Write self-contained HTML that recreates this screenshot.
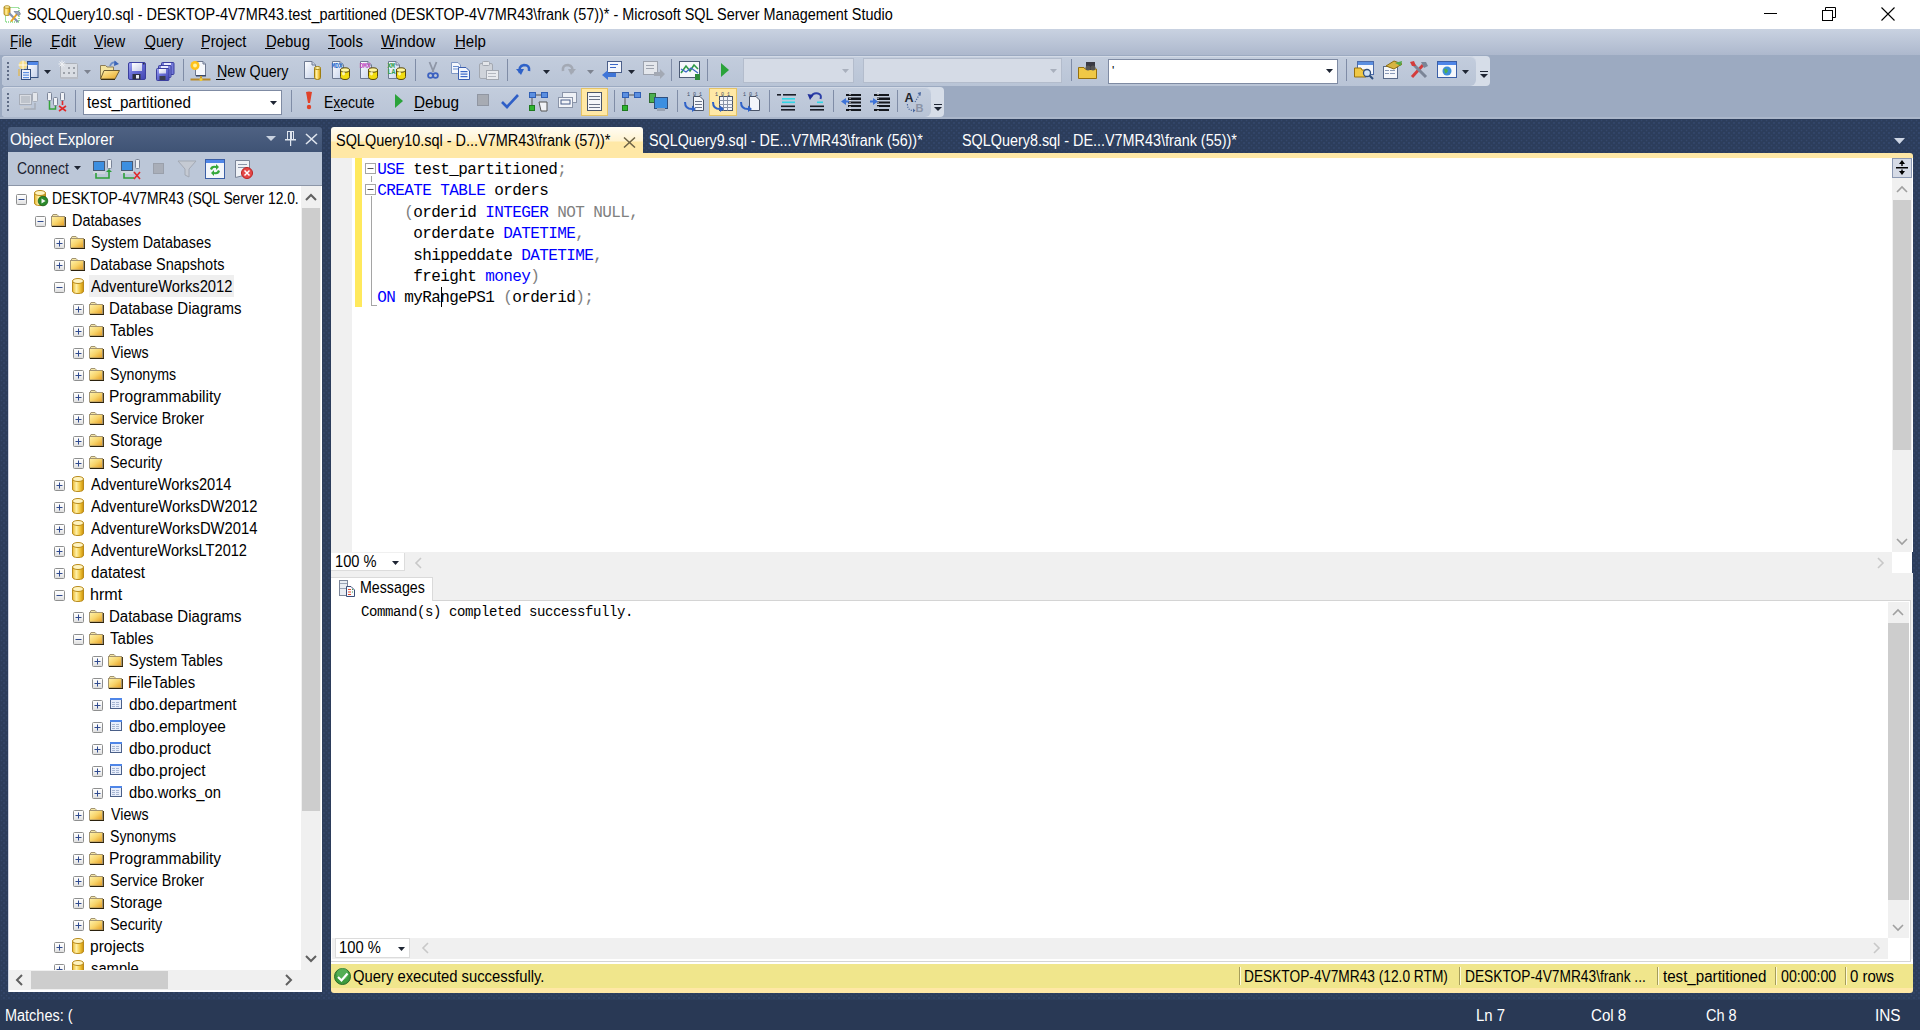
<!DOCTYPE html><html><head><meta charset="utf-8"><style>html,body{margin:0;padding:0;width:1920px;height:1030px;overflow:hidden;background:#2a3a57}body>div,body>svg,div>div,div>svg{position:absolute}</style></head><body><svg width="0" height="0" style="position:absolute"><defs><linearGradient id="gexp" x1="0" y1="0" x2="0" y2="1"><stop offset="0" stop-color="#ffffff"/><stop offset="0.5" stop-color="#f4f4f4"/><stop offset="1" stop-color="#dcdcdc"/></linearGradient><linearGradient id="gfold" x1="0" y1="0" x2="1" y2="1"><stop offset="0" stop-color="#fff3ad"/><stop offset="0.5" stop-color="#f8d46a"/><stop offset="1" stop-color="#e49a1f"/></linearGradient><linearGradient id="gcyl" x1="0" y1="0" x2="1" y2="0"><stop offset="0" stop-color="#e9b62c"/><stop offset="0.35" stop-color="#fff1a8"/><stop offset="0.7" stop-color="#f0c43a"/><stop offset="1" stop-color="#c98f0c"/></linearGradient><linearGradient id="gsave" x1="0" y1="0" x2="1" y2="1"><stop offset="0" stop-color="#a3a8f5"/><stop offset="0.4" stop-color="#6c72d8"/><stop offset="1" stop-color="#3f44b0"/></linearGradient><linearGradient id="gwin" x1="0" y1="0" x2="1" y2="1"><stop offset="0" stop-color="#ffffff"/><stop offset="1" stop-color="#c3d0ea"/></linearGradient><linearGradient id="gopen" x1="0" y1="0" x2="1" y2="1"><stop offset="0" stop-color="#fff0a8"/><stop offset="1" stop-color="#e9a623"/></linearGradient><linearGradient id="glabel" x1="0" y1="0" x2="1" y2="1"><stop offset="0" stop-color="#ffffff"/><stop offset="1" stop-color="#c9cde8"/></linearGradient></defs></svg><div style="left:0px;top:0px;width:1920px;height:29px;background:#fff"></div><svg style="left:3px;top:5px" width="20" height="19" viewBox="0 0 20 19"><rect x="2.5" y="2.5" width="13.5" height="14.5" fill="none" stroke="#3fc43f" stroke-dasharray="1 1"/><path d="M1 2 L1 9 Q1 10.5 4 10.5 Q7 10.5 7 9 L7 2 Z" fill="url(#gcyl)" stroke="#a88418" stroke-width="0.8"/><ellipse cx="4" cy="2" rx="3" ry="1.3" fill="#fff1a8" stroke="#a88418" stroke-width="0.8"/><path d="M6 8 L15 17" stroke="#8593ad" stroke-width="2.2"/><path d="M14 9 L8 16.5" stroke="#e9a524" stroke-width="2"/><path d="M11 6.5 L16 6.5 L17.5 9 L15.5 11 Z" fill="#9aa6ba" stroke="#5d6a82" stroke-width="0.6"/></svg><div id="t0" style="left:26.60px;top:5.05px;font-family:'Liberation Sans', sans-serif;font-size:16px;line-height:20.8px;color:#000;white-space:pre;transform:scaleX(0.9017);transform-origin:0 0;">SQLQuery10.sql - DESKTOP-4V7MR43.test_partitioned (DESKTOP-4V7MR43\frank (57))* - Microsoft SQL Server Management Studio</div><div style="left:1764px;top:13px;width:13px;height:1px;background:#000"></div><svg style="left:1822px;top:7px" width="14" height="14" viewBox="0 0 14 14"><rect x="0.5" y="3.5" width="10" height="10" fill="none" stroke="#000"/><path d="M3.5 3.5 L3.5 0.5 L13.5 0.5 L13.5 10.5 L10.5 10.5" fill="none" stroke="#000"/></svg><svg style="left:1881px;top:7px" width="14" height="14" viewBox="0 0 14 14"><path d="M0.5 0.5 L13.5 13.5 M13.5 0.5 L0.5 13.5" stroke="#000" stroke-width="1.1"/></svg><div style="left:0px;top:29px;width:1920px;height:26px;background:linear-gradient(#c9d2e1,#adb8cd)"></div><div id="t1" style="left:9.63px;top:32.05px;font-family:'Liberation Sans', sans-serif;font-size:16px;line-height:20.8px;color:#000;white-space:pre;transform:scaleX(0.8600);transform-origin:0 0;">File</div><div style="left:10px;top:48px;width:7px;height:1px;background:#000"></div><div id="t2" style="left:50.95px;top:32.05px;font-family:'Liberation Sans', sans-serif;font-size:16px;line-height:20.8px;color:#000;white-space:pre;transform:scaleX(0.9036);transform-origin:0 0;">Edit</div><div style="left:50px;top:48px;width:7px;height:1px;background:#000"></div><div id="t3" style="left:94.00px;top:32.05px;font-family:'Liberation Sans', sans-serif;font-size:16px;line-height:20.8px;color:#000;white-space:pre;transform:scaleX(0.9057);transform-origin:0 0;">View</div><div style="left:94px;top:48px;width:9px;height:1px;background:#000"></div><div id="t4" style="left:144.56px;top:32.05px;font-family:'Liberation Sans', sans-serif;font-size:16px;line-height:20.8px;color:#000;white-space:pre;transform:scaleX(0.8795);transform-origin:0 0;">Query</div><div style="left:144px;top:48px;width:11px;height:1px;background:#000"></div><div id="t5" style="left:201.37px;top:32.05px;font-family:'Liberation Sans', sans-serif;font-size:16px;line-height:20.8px;color:#000;white-space:pre;transform:scaleX(0.9100);transform-origin:0 0;">Project</div><div style="left:201px;top:48px;width:8px;height:1px;background:#000"></div><div id="t6" style="left:265.76px;top:32.05px;font-family:'Liberation Sans', sans-serif;font-size:16px;line-height:20.8px;color:#000;white-space:pre;transform:scaleX(0.9319);transform-origin:0 0;">Debug</div><div style="left:265px;top:48px;width:10px;height:1px;background:#000"></div><div id="t7" style="left:328.00px;top:32.05px;font-family:'Liberation Sans', sans-serif;font-size:16px;line-height:20.8px;color:#000;white-space:pre;transform:scaleX(0.9351);transform-origin:0 0;">Tools</div><div style="left:328px;top:48px;width:7px;height:1px;background:#000"></div><div id="t8" style="left:381.49px;top:32.05px;font-family:'Liberation Sans', sans-serif;font-size:16px;line-height:20.8px;color:#000;white-space:pre;transform:scaleX(0.9518);transform-origin:0 0;">Window</div><div style="left:381px;top:48px;width:13px;height:1px;background:#000"></div><div id="t9" style="left:454.77px;top:32.05px;font-family:'Liberation Sans', sans-serif;font-size:16px;line-height:20.8px;color:#000;white-space:pre;transform:scaleX(0.9394);transform-origin:0 0;">Help</div><div style="left:454px;top:48px;width:11px;height:1px;background:#000"></div><div style="left:0px;top:55px;width:1920px;height:64px;background:#9caac1"></div><div style="left:2px;top:56px;width:1488px;height:30px;background:#d6dde8;border-radius:4px"></div><div style="left:2px;top:56px;width:1474px;height:30px;background:linear-gradient(#c3cddd,#b9c4d6);border-radius:4px 6px 6px 4px;box-shadow:inset 0 1px 0 #d3dae6"></div><div style="left:2px;top:87px;width:942px;height:30px;background:#d6dde8;border-radius:4px"></div><div style="left:2px;top:87px;width:929px;height:30px;background:linear-gradient(#c3cddd,#b9c4d6);border-radius:4px 6px 6px 4px;box-shadow:inset 0 1px 0 #d3dae6"></div><div style="left:0px;top:117px;width:1920px;height:2px;background:#aab6ca"></div><div style="left:7px;top:62px;width:2px;height:2px;background:#5f6c85"></div><div style="left:7px;top:66px;width:2px;height:2px;background:#5f6c85"></div><div style="left:7px;top:70px;width:2px;height:2px;background:#5f6c85"></div><div style="left:7px;top:74px;width:2px;height:2px;background:#5f6c85"></div><div style="left:7px;top:78px;width:2px;height:2px;background:#5f6c85"></div><div style="left:7px;top:93px;width:2px;height:2px;background:#5f6c85"></div><div style="left:7px;top:97px;width:2px;height:2px;background:#5f6c85"></div><div style="left:7px;top:101px;width:2px;height:2px;background:#5f6c85"></div><div style="left:7px;top:105px;width:2px;height:2px;background:#5f6c85"></div><div style="left:7px;top:109px;width:2px;height:2px;background:#5f6c85"></div><svg style="left:18px;top:60px" width="22" height="21" viewBox="0 0 22 21"><rect x="9.5" y="1.5" width="10.5" height="16" fill="url(#gwin)" stroke="#34507f"/><rect x="10" y="2" width="10" height="3" fill="#4f86e8"/><rect x="3.5" y="9.5" width="9" height="10" fill="#eef2fa" stroke="#34507f"/><g fill="#5b8fe0"><rect x="5" y="12" width="6" height="1.2"/><rect x="5" y="14.5" width="6" height="1.2"/><rect x="5" y="17" width="6" height="1.2"/></g><circle cx="5" cy="5" r="4.2" fill="#ffe27a" opacity="0.85"/><path d="M5 0.5 L5 9.5 M0.5 5 L9.5 5" stroke="#ffffff" stroke-width="1" opacity="0.9"/><path d="M1 9 L1 16" stroke="#e6b640" stroke-width="1.2"/></svg><svg style="left:44px;top:70px" width="8" height="4" viewBox="0 0 8 4"><path d="M0 0 L7 0 L3.5 4 Z" fill="#1e2533"/></svg><svg style="left:58px;top:60px" width="22" height="21" viewBox="0 0 22 21"><rect x="2.5" y="3.5" width="17" height="15" rx="1" fill="#d9dde3" stroke="#aeb3bb"/><rect x="3" y="17" width="17" height="2" fill="#b9bdc5"/><g fill="#9ea3ab"><rect x="10" y="7" width="2" height="2"/><rect x="15" y="7" width="2" height="2"/><rect x="5" y="12" width="2" height="2"/><rect x="10" y="12" width="2" height="2"/><rect x="15" y="12" width="2" height="2"/></g><path d="M4 0.5 L4 7.5 M0.5 4 L7.5 4 M1.5 1.5 L6.5 6.5 M6.5 1.5 L1.5 6.5" stroke="#eef0f3" stroke-width="1"/></svg><svg style="left:84px;top:70px" width="8" height="4" viewBox="0 0 8 4"><path d="M0 0 L7 0 L3.5 4 Z" fill="#7d8390"/></svg><svg style="left:99px;top:60px" width="22" height="21" viewBox="0 0 22 21"><path d="M1.5 5.5 L6.5 5.5 L8 7 L14.5 7 L14.5 18.5 L1.5 18.5 Z" fill="#f4e4a0" stroke="#8c7c58"/><path d="M5 10.5 L20.5 10.5 L16 19 L1.5 19 Z" fill="url(#gopen)" stroke="#6e5d32"/><path d="M2 19.5 L16 19.5" stroke="#3a2e10" stroke-width="1"/><path d="M11 6 Q12.5 1.5 17 2.5" fill="none" stroke="#6a8cc8" stroke-width="1.8"/><path d="M15.5 0.5 L20 4 L15 6 Z" fill="#3a64b8"/></svg><svg style="left:128px;top:60px" width="20" height="21" viewBox="0 0 20 21"><rect x="0.5" y="2.5" width="17" height="17" rx="1.5" fill="url(#gsave)" stroke="#3b3f9e"/><rect x="4" y="3" width="10" height="8" fill="url(#glabel)"/><rect x="4.5" y="14" width="8" height="5.5" fill="#2d3040"/><rect x="8" y="15" width="3" height="3.5" fill="#e8eaf4"/><rect x="15" y="3" width="1.5" height="1.5" fill="#2d3040"/></svg><svg style="left:156px;top:60px" width="20" height="21" viewBox="0 0 20 21"><rect x="5.5" y="2.5" width="12.5" height="12" rx="1" fill="#7379d8" stroke="#3b3f9e"/><rect x="8" y="3" width="7" height="2" fill="#e8eaff"/><rect x="2.5" y="5.5" width="12.5" height="12" rx="1" fill="#7d83de" stroke="#3b3f9e"/><rect x="5" y="6" width="7" height="2" fill="#e8eaff"/><rect x="0.5" y="8.5" width="12.5" height="12" rx="1" fill="url(#gsave)" stroke="#3b3f9e"/><rect x="3" y="9" width="7" height="4.5" fill="url(#glabel)"/><rect x="3.5" y="16" width="6" height="4" fill="#3a3d4e"/></svg><div style="left:183px;top:59px;width:1px;height:22px;background:#7f8ca6"></div><svg style="left:190px;top:60px" width="22" height="21" viewBox="0 0 22 21"><path d="M5.5 1.5 L13 1.5 L15.5 4 L15.5 15.5 L5.5 15.5 Z" fill="#f6f8fc" stroke="#6e7890"/><path d="M13 1.5 L13 4 L15.5 4" fill="#c9d2e3" stroke="#6e7890"/><rect x="6" y="15" width="10" height="1.5" fill="#3c4a66"/><circle cx="5" cy="5.5" r="4.5" fill="#ffc21a"/><circle cx="5" cy="5.5" r="2" fill="#fff3a0"/><path d="M0.5 19.5 L20.5 19.5" stroke="#b98a2a" stroke-width="2"/><rect x="10" y="16" width="2" height="5" fill="#c99a2e"/><circle cx="11" cy="19.5" r="1.5" fill="#f3d23a"/></svg><div id="t10" style="left:216.50px;top:62.05px;font-family:'Liberation Sans', sans-serif;font-size:16px;line-height:20.8px;color:#000;white-space:pre;transform:scaleX(0.8938);transform-origin:0 0;">New Query</div><div style="left:216px;top:79px;width:9px;height:1px;background:#000"></div><svg style="left:303px;top:60px" width="20" height="21" viewBox="0 0 20 21"><path d="M1.5 1.5 L9 1.5 L12.5 5 L12.5 18.5 L1.5 18.5 Z" fill="url(#gwin)" stroke="#6e7a92"/><path d="M9 1.5 L9 5 L12.5 5" fill="#c9d2e3" stroke="#6e7a92"/><path d="M11.5 8 L11.5 17.5 Q11.5 19.5 14.5 19.5 Q17.5 19.5 17.5 17.5 L17.5 8 Z" fill="url(#gcyl)" stroke="#9e7d10"/><ellipse cx="14.5" cy="8" rx="3" ry="1.5" fill="#fff1a0" stroke="#9e7d10"/></svg><svg style="left:331px;top:60px" width="20" height="21" viewBox="0 0 20 21"><path d="M1.5 1.5 L9 1.5 L12.5 5 L12.5 18.5 L1.5 18.5 Z" fill="url(#gwin)" stroke="#6e7a92"/><path d="M9 1.5 L9 5 L12.5 5" fill="#c9d2e3" stroke="#6e7a92"/><text x="0.5" y="7.5" font-family="Liberation Mono" font-size="6.5" font-weight="bold" fill="#2f6fd0" letter-spacing="-0.3">MDX</text><path d="M9.5 10 L9.5 16.5 Q9.5 19.5 14 19.5 Q18.5 19.5 18.5 16.5 L18.5 10 Z" fill="#f2dc10" stroke="#5a4a08"/><ellipse cx="14" cy="10" rx="4.5" ry="2.2" fill="#fff7a0" stroke="#5a4a08"/><ellipse cx="12.5" cy="13.5" rx="1.5" ry="2" fill="#fffbd0" opacity="0.8"/></svg><svg style="left:359px;top:60px" width="20" height="21" viewBox="0 0 20 21"><path d="M1.5 1.5 L9 1.5 L12.5 5 L12.5 18.5 L1.5 18.5 Z" fill="url(#gwin)" stroke="#6e7a92"/><path d="M9 1.5 L9 5 L12.5 5" fill="#c9d2e3" stroke="#6e7a92"/><text x="0.5" y="7.5" font-family="Liberation Mono" font-size="6.5" font-weight="bold" fill="#c04ac0" letter-spacing="-0.3">DMX</text><path d="M9.5 10 L9.5 16.5 Q9.5 19.5 14 19.5 Q18.5 19.5 18.5 16.5 L18.5 10 Z" fill="#f2dc10" stroke="#5a4a08"/><ellipse cx="14" cy="10" rx="4.5" ry="2.2" fill="#fff7a0" stroke="#5a4a08"/><ellipse cx="12.5" cy="13.5" rx="1.5" ry="2" fill="#fffbd0" opacity="0.8"/></svg><svg style="left:387px;top:60px" width="20" height="21" viewBox="0 0 20 21"><path d="M1.5 1.5 L9 1.5 L12.5 5 L12.5 18.5 L1.5 18.5 Z" fill="url(#gwin)" stroke="#6e7a92"/><path d="M9 1.5 L9 5 L12.5 5" fill="#c9d2e3" stroke="#6e7a92"/><text x="0.5" y="7.5" font-family="Liberation Mono" font-size="6.5" font-weight="bold" fill="#30a050" letter-spacing="-0.3">XM</text><text x="0.5" y="13.5" font-family="Liberation Mono" font-size="6.5" font-weight="bold" fill="#30a050">LA</text><path d="M9.5 10 L9.5 16.5 Q9.5 19.5 14 19.5 Q18.5 19.5 18.5 16.5 L18.5 10 Z" fill="#f2dc10" stroke="#5a4a08"/><ellipse cx="14" cy="10" rx="4.5" ry="2.2" fill="#fff7a0" stroke="#5a4a08"/><ellipse cx="12.5" cy="13.5" rx="1.5" ry="2" fill="#fffbd0" opacity="0.8"/></svg><div style="left:415px;top:59px;width:1px;height:22px;background:#7f8ca6"></div><svg style="left:424px;top:60px" width="18" height="21" viewBox="0 0 18 21"><path d="M5.5 2 L9.5 12 M12.5 2 L8.5 12" stroke="#8e96a6" stroke-width="1.8"/><circle cx="6.5" cy="15.5" r="2.4" fill="none" stroke="#3d62c0" stroke-width="1.8"/><circle cx="11.5" cy="15.5" r="2.4" fill="none" stroke="#3d62c0" stroke-width="1.8"/></svg><svg style="left:450px;top:60px" width="22" height="21" viewBox="0 0 22 21"><path d="M1.5 2.5 L8 2.5 L10.5 5 L10.5 13.5 L1.5 13.5 Z" fill="#f4f7fd" stroke="#7f97c4"/><g fill="#6b8fd0"><rect x="3" y="6" width="6" height="1"/><rect x="3" y="8.5" width="6" height="1"/></g><path d="M8.5 7.5 L16 7.5 L19.5 11 L19.5 19.5 L8.5 19.5 Z" fill="#f4f7fd" stroke="#3b5fb0"/><g fill="#3b67c7"><rect x="10.5" y="11" width="7" height="1.2"/><rect x="10.5" y="13.5" width="7" height="1.2"/><rect x="10.5" y="16" width="7" height="1.2"/></g></svg><svg style="left:478px;top:60px" width="22" height="21" viewBox="0 0 22 21"><rect x="1.5" y="3.5" width="13" height="15" rx="1.5" fill="#cfd3da" stroke="#a3a8b1"/><rect x="4.5" y="1.5" width="7" height="4" rx="1" fill="#e4e6ea" stroke="#a3a8b1"/><rect x="8.5" y="10.5" width="12" height="9" fill="#e8eaee" stroke="#a3a8b1"/><g fill="#b4b8c0"><rect x="10" y="13" width="8" height="1"/><rect x="10" y="16" width="8" height="1"/></g></svg><div style="left:507px;top:59px;width:1px;height:22px;background:#7f8ca6"></div><svg style="left:514px;top:60px" width="20" height="20" viewBox="0 0 20 20"><path d="M6 13 Q4 6 10 5 Q16 5 15 11" fill="none" stroke="#2f62c8" stroke-width="2.6"/><path d="M2 9 L7 15 L10 9 Z" fill="#2f62c8"/></svg><svg style="left:543px;top:70px" width="8" height="4" viewBox="0 0 8 4"><path d="M0 0 L7 0 L3.5 4 Z" fill="#1e2533"/></svg><svg style="left:558px;top:60px" width="20" height="20" viewBox="0 0 20 20"><path d="M14 13 Q16 6 10 5 Q4 5 5 11" fill="none" stroke="#a3a9b4" stroke-width="2.6"/><path d="M18 9 L13 15 L10 9 Z" fill="#a3a9b4"/></svg><svg style="left:587px;top:70px" width="8" height="4" viewBox="0 0 8 4"><path d="M0 0 L7 0 L3.5 4 Z" fill="#7d8390"/></svg><svg style="left:601px;top:60px" width="24" height="20" viewBox="0 0 24 20"><rect x="6.5" y="1.5" width="14" height="11" fill="#f3f6fc" stroke="#4b5f8a"/><rect x="9" y="4" width="8" height="1" fill="#3b67c7"/><rect x="9" y="7" width="6" height="1" fill="#3b67c7"/><path d="M1 15 L7 10 L7 13 L15 13 L15 17 L7 17 L7 20 Z" fill="#3f75d8"/></svg><svg style="left:628px;top:70px" width="8" height="4" viewBox="0 0 8 4"><path d="M0 0 L7 0 L3.5 4 Z" fill="#1e2533"/></svg><svg style="left:642px;top:60px" width="24" height="20" viewBox="0 0 24 20"><rect x="1.5" y="1.5" width="14" height="13" fill="#e4e7ec" stroke="#9da3ae"/><rect x="4" y="5" width="8" height="1" fill="#9da3ae"/><rect x="4" y="8" width="8" height="1" fill="#9da3ae"/><path d="M12 12 L18 12 L18 9 L23 14 L18 19 L18 16 L12 16 Z" fill="#a3a9b4"/></svg><div style="left:671px;top:59px;width:1px;height:22px;background:#7f8ca6"></div><svg style="left:679px;top:60px" width="22" height="20" viewBox="0 0 22 20"><rect x="0.5" y="1.5" width="20" height="16" fill="#f5f7fb" stroke="#4c5a74"/><path d="M2 13 L7 6 L11 11 L15 5 L19 9" fill="none" stroke="#2e9a46" stroke-width="1.6"/><path d="M2 9 L7 12 L12 8 L19 13" fill="none" stroke="#3b67c7" stroke-width="1.2"/><rect x="16" y="14" width="5" height="6" fill="#2e8a3a"/></svg><div style="left:707px;top:59px;width:1px;height:22px;background:#7f8ca6"></div><svg style="left:719px;top:60px" width="12" height="20" viewBox="0 0 12 20"><path d="M2 3 L10 10 L2 17 Z" fill="#2aa33a"/></svg><div style="left:743px;top:58px;width:111px;height:25px;background:#d5dbe6;border:1px solid #b3bccc;box-sizing:border-box"></div><svg style="left:842px;top:69px" width="8" height="4" viewBox="0 0 8 4"><path d="M0 0 L7 0 L3.5 4 Z" fill="#a9b0bd"/></svg><div style="left:863px;top:58px;width:199px;height:25px;background:#d5dbe6;border:1px solid #b3bccc;box-sizing:border-box"></div><svg style="left:1050px;top:69px" width="8" height="4" viewBox="0 0 8 4"><path d="M0 0 L7 0 L3.5 4 Z" fill="#a9b0bd"/></svg><div style="left:1071px;top:59px;width:1px;height:22px;background:#7f8ca6"></div><svg style="left:1077px;top:60px" width="22" height="20" viewBox="0 0 22 20"><path d="M1.5 7.5 L7 7.5 L8 9 L19.5 9 L19.5 18.5 L1.5 18.5 Z" fill="#f0c845" stroke="#96700f"/><rect x="9" y="2" width="9" height="8" fill="#3a3a44"/><circle cx="11" cy="8" r="2.5" fill="#555"/><circle cx="16" cy="8" r="2.5" fill="#555"/></svg><div style="left:1108px;top:59px;width:230px;height:25px;background:#fff;border:1px solid #7f8ba3;box-sizing:border-box"></div><div style="left:1112.00px;top:64.04px;font-family:'Liberation Sans', sans-serif;font-size:12px;line-height:15.6px;color:#000;white-space:pre;">'</div><svg style="left:1326px;top:69px" width="8" height="4" viewBox="0 0 8 4"><path d="M0 0 L7 0 L3.5 4 Z" fill="#1e2533"/></svg><div style="left:1346px;top:59px;width:1px;height:22px;background:#7f8ca6"></div><svg style="left:1353px;top:60px" width="22" height="20" viewBox="0 0 22 20"><rect x="4.5" y="1.5" width="16" height="13" fill="#f5f7fb" stroke="#4b6aa8"/><rect x="5" y="2" width="15" height="3" fill="#5b8fe0"/><path d="M1.5 8 L8 8 L9 10 L13 10 L13 17 L1.5 17 Z" fill="#f0c845" stroke="#96700f"/><circle cx="14" cy="13" r="3.5" fill="#cfe3f7" stroke="#2f4f7f" stroke-width="1.3"/><path d="M16.5 15.5 L20 19" stroke="#2f4f7f" stroke-width="2"/></svg><svg style="left:1381px;top:60px" width="22" height="20" viewBox="0 0 22 20"><rect x="2.5" y="6.5" width="14" height="12" fill="#f5f7fb" stroke="#5a6b8a"/><g fill="#8a9ab8"><rect x="4" y="10" width="4" height="1"/><rect x="9" y="10" width="5" height="1"/><rect x="4" y="13" width="4" height="1"/><rect x="9" y="13" width="5" height="1"/></g><path d="M5 6 L13 1 L21 4 L13 9 Z" fill="#d8b441" stroke="#8d6c12"/><path d="M14 3 L21 1 L20 6" fill="#56a84a"/></svg><svg style="left:1409px;top:60px" width="22" height="20" viewBox="0 0 22 20"><path d="M3 17 L14 5" stroke="#d43c3c" stroke-width="3"/><path d="M4 4 L17 17" stroke="#7b8597" stroke-width="3"/><path d="M12 2 L17 2 L19 6 L15 8 Z" fill="#7b8597"/><path d="M1 2 L5 1 L7 6 L3 6 Z" fill="#d43c3c"/></svg><svg style="left:1437px;top:60px" width="22" height="20" viewBox="0 0 22 20"><rect x="0.5" y="1.5" width="19" height="16" fill="#f5f7fb" stroke="#3b5fa6"/><rect x="1" y="2" width="18" height="3" fill="#4f86e8"/><circle cx="10" cy="11" r="4.5" fill="#3c8fd8"/><path d="M7 9 Q10 8 11 11 Q9 14 8 13 Z" fill="#4fb04a"/></svg><svg style="left:1462px;top:70px" width="8" height="4" viewBox="0 0 8 4"><path d="M0 0 L7 0 L3.5 4 Z" fill="#1e2533"/></svg><svg style="left:1479px;top:65px" width="10" height="16" viewBox="0 0 10 16"><rect x="1" y="6" width="8" height="1" fill="#1e2533"/><path d="M1 9 L9 9 L5 13 Z" fill="#1e2533"/></svg><svg style="left:18px;top:91px" width="22" height="20" viewBox="0 0 22 20"><rect x="1.5" y="3.5" width="12" height="10" fill="#d9dce2" stroke="#a7adb8"/><rect x="3" y="5" width="9" height="7" fill="#bfc4cc"/><rect x="2" y="15" width="11" height="3" fill="#c8ccd3"/><rect x="14.5" y="1.5" width="5" height="9" rx="1" fill="#e3e6eb" stroke="#a7adb8"/><path d="M17 12 L17 18 L6 18" fill="none" stroke="#a7adb8" stroke-width="1.5"/></svg><svg style="left:46px;top:91px" width="22" height="22" viewBox="0 0 22 22"><rect x="1.5" y="1.5" width="4" height="8" rx="1" fill="#f0f2f6" stroke="#7a8498"/><rect x="7.5" y="6.5" width="4" height="8" rx="1" fill="#f0f2f6" stroke="#7a8498"/><rect x="14.5" y="1.5" width="4" height="8" rx="1" fill="#f0f2f6" stroke="#7a8498"/><path d="M3.5 10 L3.5 18 L9.5 18 L9.5 15" fill="none" stroke="#34a33a" stroke-width="1.5"/><path d="M16.5 10 L16.5 14 M13 15 L20 20 M20 15 L13 20" stroke="#e02a2a" stroke-width="1.6"/></svg><div style="left:75px;top:90px;width:1px;height:22px;background:#7f8ca6"></div><div style="left:83px;top:90px;width:199px;height:25px;background:#fff;border:1px solid #7f8ba3;box-sizing:border-box"></div><div id="t11" style="left:86.50px;top:93.05px;font-family:'Liberation Sans', sans-serif;font-size:16px;line-height:20.8px;color:#000;white-space:pre;transform:scaleX(0.9491);transform-origin:0 0;">test_partitioned</div><svg style="left:270px;top:101px" width="8" height="4" viewBox="0 0 8 4"><path d="M0 0 L7 0 L3.5 4 Z" fill="#1e2533"/></svg><div style="left:291px;top:90px;width:1px;height:22px;background:#7f8ca6"></div><svg style="left:303px;top:91px" width="12" height="20" viewBox="0 0 12 20"><path d="M3 1 Q6 0 9 1 L7 12 L5 12 Z" fill="#e0422a"/><circle cx="6" cy="16" r="2.2" fill="#e0422a"/></svg><div id="t12" style="left:324.12px;top:93.05px;font-family:'Liberation Sans', sans-serif;font-size:16px;line-height:20.8px;color:#000;white-space:pre;transform:scaleX(0.8750);transform-origin:0 0;">Execute</div><div style="left:334px;top:110px;width:8px;height:1px;background:#000"></div><svg style="left:393px;top:91px" width="12" height="20" viewBox="0 0 12 20"><path d="M2 3 L10 10 L2 17 Z" fill="#2aa33a"/></svg><div id="t13" style="left:414.00px;top:93.05px;font-family:'Liberation Sans', sans-serif;font-size:16px;line-height:20.8px;color:#000;white-space:pre;transform:scaleX(0.9565);transform-origin:0 0;">Debug</div><div style="left:414px;top:110px;width:10px;height:1px;background:#000"></div><svg style="left:475px;top:92px" width="16" height="16" viewBox="0 0 16 16"><rect x="2.5" y="2.5" width="11" height="11" fill="#a7abb3" stroke="#9096a2"/></svg><svg style="left:500px;top:91px" width="20" height="20" viewBox="0 0 20 20"><path d="M2 11 L7 16 L18 4" fill="none" stroke="#2f5fc7" stroke-width="2.6"/></svg><svg style="left:528px;top:91px" width="22" height="22" viewBox="0 0 22 22"><rect x="1.5" y="1.5" width="6" height="5" fill="#5b8fe0" stroke="#2f5fb5"/><rect x="13.5" y="1.5" width="6" height="5" fill="#5b8fe0" stroke="#2f5fb5"/><rect x="1.5" y="14.5" width="5" height="5" fill="#2fb52f" stroke="#1e7a1e"/><path d="M8 4 L13 4 M4 7 L4 14" stroke="#555" stroke-width="1"/><path d="M11 11 L19 11 L19 20 L13 20 Z" fill="#f0f2f6" stroke="#555"/></svg><svg style="left:557px;top:91px" width="22" height="22" viewBox="0 0 22 22"><rect x="5.5" y="1.5" width="14" height="10" fill="#eef1f6" stroke="#8a94a8"/><rect x="1.5" y="6.5" width="14" height="10" fill="#f3f5f9" stroke="#8a94a8"/><rect x="4" y="9" width="9" height="4" fill="none" stroke="#4b5f8a"/></svg><div style="left:581px;top:88px;width:27px;height:28px;background:#ffe8a6;border:1px solid #e5c365;box-sizing:border-box"></div><svg style="left:584px;top:91px" width="22" height="22" viewBox="0 0 22 22"><rect x="3.5" y="1.5" width="14" height="18" fill="#f4f6fa" stroke="#4a5468"/><g fill="#6b7488"><rect x="5" y="5" width="11" height="1"/><rect x="5" y="8" width="11" height="1"/><rect x="5" y="13" width="11" height="1"/><rect x="5" y="16" width="11" height="1"/></g></svg><div style="left:614px;top:90px;width:1px;height:22px;background:#7f8ca6"></div><svg style="left:621px;top:91px" width="22" height="22" viewBox="0 0 22 22"><rect x="1.5" y="1.5" width="6" height="5" fill="#5b8fe0" stroke="#2f5fb5"/><rect x="13.5" y="1.5" width="6" height="5" fill="#5b8fe0" stroke="#2f5fb5"/><rect x="1.5" y="14.5" width="5" height="5" fill="#2fb52f" stroke="#1e7a1e"/><path d="M8 4 L13 4 M4 7 L4 14" stroke="#555" stroke-width="1"/></svg><svg style="left:648px;top:91px" width="22" height="22" viewBox="0 0 22 22"><rect x="1.5" y="2.5" width="6" height="9" fill="#4caf50" stroke="#2e6b2f"/><rect x="6.5" y="6.5" width="13" height="11" fill="#3d8fe0" stroke="#2f4f7f"/><rect x="9" y="17" width="8" height="3" fill="#9aa3b3"/></svg><div style="left:677px;top:90px;width:1px;height:22px;background:#7f8ca6"></div><svg style="left:684px;top:90px" width="22" height="23" viewBox="0 0 22 23"><g fill="#3a4a66" font-family="Liberation Mono" font-size="5"><text x="3" y="6">1 0 1</text></g><path d="M9.5 6.5 L16 6.5 L19.5 10 L19.5 20.5 L9.5 20.5 Z" fill="#f3f5fa" stroke="#4a5468"/><g fill="#6b7488"><rect x="11" y="11" width="7" height="1"/><rect x="11" y="14" width="7" height="1"/><rect x="11" y="17" width="7" height="1"/></g><path d="M2 12 Q2 18 8 18 L8 15.5 L12 19 L8 22 L8 20 Q0 20 0 12 Z" fill="#2f62c8"/></svg><div style="left:709px;top:88px;width:28px;height:28px;background:#ffe8a6;border:1px solid #e5c365;box-sizing:border-box"></div><svg style="left:712px;top:90px" width="22" height="23" viewBox="0 0 22 23"><g fill="#3a4a66" font-family="Liberation Mono" font-size="5"><text x="3" y="6">1 0 1</text></g><rect x="7.5" y="6.5" width="13" height="14" fill="#f3f5fa" stroke="#4a5468"/><path d="M7.5 10.5 L20.5 10.5 M7.5 14.5 L20.5 14.5 M7.5 17.5 L20.5 17.5 M11.5 6.5 L11.5 20.5 M15.5 6.5 L15.5 20.5" stroke="#8a94a8"/><path d="M2 12 Q2 18 8 18 L8 15.5 L12 19 L8 22 L8 20 Q0 20 0 12 Z" fill="#2f62c8"/></svg><svg style="left:740px;top:90px" width="22" height="23" viewBox="0 0 22 23"><g fill="#3a4a66" font-family="Liberation Mono" font-size="5"><text x="3" y="6">1 0 1</text></g><path d="M9.5 6.5 L16 6.5 L19.5 10 L19.5 20.5 L9.5 20.5 Z" fill="#f3f5fa" stroke="#4a5468"/><path d="M2 12 Q2 18 8 18 L8 15.5 L12 19 L8 22 L8 20 Q0 20 0 12 Z" fill="#2f62c8"/></svg><div style="left:769px;top:90px;width:1px;height:22px;background:#7f8ca6"></div><svg style="left:776px;top:91px" width="22" height="22" viewBox="0 0 22 22"><g fill="#1b1f28"><rect x="1" y="3" width="4" height="1.6"/><rect x="7" y="3" width="13" height="1.6"/><rect x="5" y="14.5" width="14" height="1.6"/><rect x="5" y="18" width="14" height="1.6"/></g><g fill="#2fd6e6"><rect x="6" y="7" width="13" height="1.6"/><rect x="6" y="10.5" width="13" height="1.6"/></g></svg><svg style="left:806px;top:91px" width="22" height="22" viewBox="0 0 22 22"><path d="M5 6 Q7 1.5 12 2.5 Q16 3.5 14.5 8" fill="none" stroke="#2b3fa8" stroke-width="2"/><path d="M1.5 3 L7.5 4 L4 9 Z" fill="#1f2f9a"/><rect x="11" y="10.5" width="6" height="1.6" fill="#2fd6e6"/><g fill="#1b1f28"><rect x="4" y="14.5" width="14" height="1.6"/><rect x="4" y="18" width="14" height="1.6"/></g></svg><div style="left:833px;top:90px;width:1px;height:22px;background:#7f8ca6"></div><svg style="left:840px;top:91px" width="22" height="22" viewBox="0 0 22 22"><g fill="#14171d"><rect x="6" y="3" width="15" height="2"/><rect x="8" y="6.5" width="13" height="2.5"/><rect x="8" y="10.5" width="13" height="2"/><rect x="8" y="14" width="13" height="2"/><rect x="6" y="18" width="15" height="2"/></g><path d="M10 1 L10 21" stroke="#ffffff" stroke-dasharray="1 1" stroke-width="1"/><path d="M1 10.5 L6 7 L6 9.5 L9 9.5 L9 11.5 L6 11.5 L6 14 Z" fill="#3f74d8"/></svg><svg style="left:869px;top:91px" width="22" height="22" viewBox="0 0 22 22"><g fill="#14171d"><rect x="5" y="3" width="15" height="2"/><rect x="8" y="6.5" width="13" height="2.5"/><rect x="8" y="10.5" width="13" height="2"/><rect x="8" y="14" width="13" height="2"/><rect x="5" y="18" width="15" height="2"/></g><path d="M9 1 L9 21" stroke="#ffffff" stroke-dasharray="1 1" stroke-width="1"/><path d="M9 10.5 L4 7 L4 9.5 L1 9.5 L1 11.5 L4 11.5 L4 14 Z" fill="#3f74d8"/></svg><div style="left:897px;top:90px;width:1px;height:22px;background:#7f8ca6"></div><svg style="left:904px;top:91px" width="22" height="22" viewBox="0 0 22 22"><text x="0.5" y="11" font-family="Liberation Sans" font-size="12.5" font-weight="bold" fill="#22262e">A</text><text x="11.5" y="21" font-family="Liberation Sans" font-size="11" font-weight="bold" fill="#8a93a6">B</text><path d="M3.5 13 Q3 19 9 19.5" fill="none" stroke="#4d6aa0" stroke-dasharray="1.2 1.3" stroke-width="1.2"/><path d="M9 17.5 L11.5 19.5 L9 21.5 Z" fill="#4d6aa0"/><path d="M11 11 L15.5 3.5" fill="none" stroke="#4d6aa0" stroke-dasharray="1.2 1.3" stroke-width="1.2"/><path d="M13.5 2 L17 1 L16.5 5 Z" fill="#4d6aa0"/></svg><svg style="left:933px;top:100px" width="10" height="16" viewBox="0 0 10 16"><rect x="1" y="4" width="8" height="1" fill="#1e2533"/><path d="M1 7 L9 7 L5 11 Z" fill="#1e2533"/></svg><div style="left:0px;top:119px;width:1920px;height:881px;background-color:#2c3d5b;background-image:radial-gradient(circle at 1.5px 1.5px,#34476b 0.6px,transparent 1.1px),radial-gradient(circle at 4px 4px,#34476b 0.6px,transparent 1.1px);background-size:5px 5px"></div><div style="left:0px;top:1000px;width:1920px;height:30px;background:#293955"></div><div style="left:8px;top:127px;width:314px;height:25px;background:linear-gradient(#4f6283,#3f5375);border-radius:3px 3px 0 0"></div><div id="t14" style="left:9.56px;top:130.05px;font-family:'Liberation Sans', sans-serif;font-size:16px;line-height:20.8px;color:#fff;white-space:pre;transform:scaleX(0.9404);transform-origin:0 0;">Object Explorer</div><svg style="left:266px;top:136px" width="11" height="6" viewBox="0 0 11 6"><path d="M0 0 L10 0 L5 5 Z" fill="#c9d2e0"/></svg><svg style="left:285px;top:131px" width="11" height="16" viewBox="0 0 11 16"><rect x="2.5" y="0.5" width="6" height="8" fill="none" stroke="#dfe5ee"/><rect x="5" y="1" width="2" height="7" fill="#dfe5ee"/><rect x="0" y="8" width="11" height="1.5" fill="#dfe5ee"/><rect x="5" y="9" width="1.2" height="6" fill="#dfe5ee"/></svg><svg style="left:305px;top:133px" width="13" height="12" viewBox="0 0 13 12"><path d="M1 1 L12 11 M12 1 L1 11" stroke="#dfe5ee" stroke-width="1.6"/></svg><div style="left:8px;top:152px;width:314px;height:34px;background:#bcc7d8"></div><div id="t15" style="left:16.63px;top:159.05px;font-family:'Liberation Sans', sans-serif;font-size:16px;line-height:20.8px;color:#1b2230;white-space:pre;transform:scaleX(0.8689);transform-origin:0 0;">Connect</div><svg style="left:74px;top:166px" width="8" height="4" viewBox="0 0 8 4"><path d="M0 0 L7 0 L3.5 4 Z" fill="#1e2533"/></svg><svg style="left:92px;top:158px" width="22" height="22" viewBox="0 0 22 22"><rect x="1.5" y="3.5" width="11" height="9" fill="#3d8fe0" stroke="#4a5a74"/><rect x="1" y="13" width="12" height="3" fill="#cfd5de"/><rect x="15.5" y="1.5" width="4" height="9" rx="1" fill="#eef1f5" stroke="#7a8498"/><path d="M4 15 L4 20 L17 20 L17 13" fill="none" stroke="#2ea03a" stroke-width="1.6"/><path d="M14 14 L17 11 L20 14 Z" fill="#2ea03a"/></svg><svg style="left:120px;top:158px" width="22" height="22" viewBox="0 0 22 22"><rect x="1.5" y="3.5" width="11" height="9" fill="#3d8fe0" stroke="#4a5a74"/><rect x="1" y="13" width="12" height="3" fill="#cfd5de"/><rect x="15.5" y="1.5" width="4" height="9" rx="1" fill="#eef1f5" stroke="#7a8498"/><path d="M4 15 L4 20 L14 20" fill="none" stroke="#2ea03a" stroke-width="1.6"/><path d="M14 14 L20 21 M20 14 L14 21" stroke="#e02a2a" stroke-width="1.6"/></svg><svg style="left:152px;top:162px" width="14" height="14" viewBox="0 0 14 14"><rect x="1.5" y="1.5" width="10" height="10" fill="#a9aeb8" stroke="#9aa0ab"/></svg><svg style="left:177px;top:159px" width="20" height="20" viewBox="0 0 20 20"><path d="M1 2 L19 2 L12 10 L12 18 L8 16 L8 10 Z" fill="#c5cad3" stroke="#a3a9b4"/></svg><svg style="left:204px;top:158px" width="22" height="22" viewBox="0 0 22 22"><rect x="1.5" y="1.5" width="19" height="19" fill="#f3f6fb" stroke="#3b5fa6"/><rect x="2" y="2" width="18" height="3" fill="#4f86e8"/><path d="M6 11 Q7 7 12 8 L12 6 L15 9 L12 12 L12 10 Q9 9 8 12 Z" fill="#35a83a"/><path d="M16 13 Q15 17 10 16 L10 18 L7 15 L10 12 L10 14 Q13 15 14 12 Z" fill="#35a83a"/></svg><svg style="left:232px;top:158px" width="22" height="22" viewBox="0 0 22 22"><path d="M3.5 2.5 L17.5 2.5 L17.5 16 L3.5 19.5 Z" fill="#eef1f6" stroke="#7a8498"/><g fill="#8a94a8"><rect x="6" y="6" width="9" height="1"/><rect x="6" y="9" width="9" height="1"/></g><circle cx="15" cy="15" r="5.5" fill="#e54848" stroke="#b22"/><path d="M12.5 12.5 L17.5 17.5 M17.5 12.5 L12.5 17.5" stroke="#fff" stroke-width="1.5"/></svg><div style="left:8px;top:185px;width:314px;height:807px;background:#fff;border-left:1px solid #cfd6e2;box-sizing:border-box"></div><div style="left:8px;top:185px;width:314px;height:1px;background:#8c96a8"></div><svg style="left:16px;top:194px" width="11" height="11" viewBox="0 0 11 11"><rect x="0.5" y="0.5" width="10" height="10" rx="1" fill="url(#gexp)" stroke="#8e8f8f"/><rect x="2.5" y="5" width="6" height="1" fill="#2f4a8f"/></svg><svg style="left:34px;top:190px" width="15" height="18" viewBox="0 0 15 18"><path d="M0.5 3 L0.5 13 Q0.5 15.5 6 15.5 Q11.5 15.5 11.5 13 L11.5 3 Z" fill="url(#gcyl)" stroke="#b98b1c"/><ellipse cx="6" cy="3" rx="5.5" ry="2.5" fill="#fff4c0" stroke="#b98b1c"/><circle cx="9" cy="11" r="4.8" fill="#2a8a2a" stroke="#1a5e1a" stroke-width="0.8"/><path d="M7.5 8.4 L11.6 11 L7.5 13.6 Z" fill="#f2f7f2"/></svg><div id="t16" style="left:52.20px;top:189.05px;font-family:'Liberation Sans', sans-serif;font-size:16px;line-height:20.8px;color:#000;white-space:pre;transform:scaleX(0.8643);transform-origin:0 0;">DESKTOP-4V7MR43 (SQL Server 12.0.</div><svg style="left:35px;top:216px" width="11" height="11" viewBox="0 0 11 11"><rect x="0.5" y="0.5" width="10" height="10" rx="1" fill="url(#gexp)" stroke="#8e8f8f"/><rect x="2.5" y="5" width="6" height="1" fill="#2f4a8f"/></svg><svg style="left:51px;top:214px" width="16" height="13" viewBox="0 0 16 13"><path d="M1.5 2.5 L1.5 1 L2 0.5 L6 0.5 L7 1.5 L7 2.5" fill="#f4e6a6" stroke="#a39472"/><rect x="0.5" y="2.5" width="13" height="9.5" fill="url(#gfold)" stroke="#a39472"/><rect x="1" y="12" width="14" height="1" fill="#2b210c"/><rect x="14" y="3" width="1" height="9" fill="#4a3a15"/></svg><div id="t17" style="left:71.71px;top:211.05px;font-family:'Liberation Sans', sans-serif;font-size:16px;line-height:20.8px;color:#000;white-space:pre;transform:scaleX(0.9040);transform-origin:0 0;">Databases</div><svg style="left:54px;top:238px" width="11" height="11" viewBox="0 0 11 11"><rect x="0.5" y="0.5" width="10" height="10" rx="1" fill="url(#gexp)" stroke="#8e8f8f"/><rect x="2.5" y="5" width="6" height="1" fill="#2f4a8f"/><rect x="5" y="2.5" width="1" height="6" fill="#2f4a8f"/></svg><svg style="left:70px;top:236px" width="16" height="13" viewBox="0 0 16 13"><path d="M1.5 2.5 L1.5 1 L2 0.5 L6 0.5 L7 1.5 L7 2.5" fill="#f4e6a6" stroke="#a39472"/><rect x="0.5" y="2.5" width="13" height="9.5" fill="url(#gfold)" stroke="#a39472"/><rect x="1" y="12" width="14" height="1" fill="#2b210c"/><rect x="14" y="3" width="1" height="9" fill="#4a3a15"/></svg><div id="t18" style="left:91.05px;top:233.05px;font-family:'Liberation Sans', sans-serif;font-size:16px;line-height:20.8px;color:#000;white-space:pre;transform:scaleX(0.8940);transform-origin:0 0;">System Databases</div><svg style="left:54px;top:260px" width="11" height="11" viewBox="0 0 11 11"><rect x="0.5" y="0.5" width="10" height="10" rx="1" fill="url(#gexp)" stroke="#8e8f8f"/><rect x="2.5" y="5" width="6" height="1" fill="#2f4a8f"/><rect x="5" y="2.5" width="1" height="6" fill="#2f4a8f"/></svg><svg style="left:70px;top:258px" width="16" height="13" viewBox="0 0 16 13"><path d="M1.5 2.5 L1.5 1 L2 0.5 L6 0.5 L7 1.5 L7 2.5" fill="#f4e6a6" stroke="#a39472"/><rect x="0.5" y="2.5" width="13" height="9.5" fill="url(#gfold)" stroke="#a39472"/><rect x="1" y="12" width="14" height="1" fill="#2b210c"/><rect x="14" y="3" width="1" height="9" fill="#4a3a15"/></svg><div id="t19" style="left:90.14px;top:255.05px;font-family:'Liberation Sans', sans-serif;font-size:16px;line-height:20.8px;color:#000;white-space:pre;transform:scaleX(0.9048);transform-origin:0 0;">Database Snapshots</div><div style="left:89px;top:275px;width:145px;height:22px;background:#efefef"></div><svg style="left:54px;top:282px" width="11" height="11" viewBox="0 0 11 11"><rect x="0.5" y="0.5" width="10" height="10" rx="1" fill="url(#gexp)" stroke="#8e8f8f"/><rect x="2.5" y="5" width="6" height="1" fill="#2f4a8f"/></svg><svg style="left:72px;top:278px" width="15" height="18" viewBox="0 0 15 18"><path d="M0.5 3 L0.5 13 Q0.5 15.5 6 15.5 Q11.5 15.5 11.5 13 L11.5 3 Z" fill="url(#gcyl)" stroke="#b98b1c"/><ellipse cx="6" cy="3" rx="5.5" ry="2.5" fill="#fff4c0" stroke="#b98b1c"/></svg><div id="t20" style="left:91.04px;top:277.05px;font-family:'Liberation Sans', sans-serif;font-size:16px;line-height:20.8px;color:#000;white-space:pre;transform:scaleX(0.9211);transform-origin:0 0;">AdventureWorks2012</div><svg style="left:73px;top:304px" width="11" height="11" viewBox="0 0 11 11"><rect x="0.5" y="0.5" width="10" height="10" rx="1" fill="url(#gexp)" stroke="#8e8f8f"/><rect x="2.5" y="5" width="6" height="1" fill="#2f4a8f"/><rect x="5" y="2.5" width="1" height="6" fill="#2f4a8f"/></svg><svg style="left:89px;top:302px" width="16" height="13" viewBox="0 0 16 13"><path d="M1.5 2.5 L1.5 1 L2 0.5 L6 0.5 L7 1.5 L7 2.5" fill="#f4e6a6" stroke="#a39472"/><rect x="0.5" y="2.5" width="13" height="9.5" fill="url(#gfold)" stroke="#a39472"/><rect x="1" y="12" width="14" height="1" fill="#2b210c"/><rect x="14" y="3" width="1" height="9" fill="#4a3a15"/></svg><div id="t21" style="left:108.70px;top:299.05px;font-family:'Liberation Sans', sans-serif;font-size:16px;line-height:20.8px;color:#000;white-space:pre;transform:scaleX(0.9374);transform-origin:0 0;">Database Diagrams</div><svg style="left:73px;top:326px" width="11" height="11" viewBox="0 0 11 11"><rect x="0.5" y="0.5" width="10" height="10" rx="1" fill="url(#gexp)" stroke="#8e8f8f"/><rect x="2.5" y="5" width="6" height="1" fill="#2f4a8f"/><rect x="5" y="2.5" width="1" height="6" fill="#2f4a8f"/></svg><svg style="left:89px;top:324px" width="16" height="13" viewBox="0 0 16 13"><path d="M1.5 2.5 L1.5 1 L2 0.5 L6 0.5 L7 1.5 L7 2.5" fill="#f4e6a6" stroke="#a39472"/><rect x="0.5" y="2.5" width="13" height="9.5" fill="url(#gfold)" stroke="#a39472"/><rect x="1" y="12" width="14" height="1" fill="#2b210c"/><rect x="14" y="3" width="1" height="9" fill="#4a3a15"/></svg><div id="t22" style="left:109.64px;top:321.05px;font-family:'Liberation Sans', sans-serif;font-size:16px;line-height:20.8px;color:#000;white-space:pre;transform:scaleX(0.9422);transform-origin:0 0;">Tables</div><svg style="left:73px;top:348px" width="11" height="11" viewBox="0 0 11 11"><rect x="0.5" y="0.5" width="10" height="10" rx="1" fill="url(#gexp)" stroke="#8e8f8f"/><rect x="2.5" y="5" width="6" height="1" fill="#2f4a8f"/><rect x="5" y="2.5" width="1" height="6" fill="#2f4a8f"/></svg><svg style="left:89px;top:346px" width="16" height="13" viewBox="0 0 16 13"><path d="M1.5 2.5 L1.5 1 L2 0.5 L6 0.5 L7 1.5 L7 2.5" fill="#f4e6a6" stroke="#a39472"/><rect x="0.5" y="2.5" width="13" height="9.5" fill="url(#gfold)" stroke="#a39472"/><rect x="1" y="12" width="14" height="1" fill="#2b210c"/><rect x="14" y="3" width="1" height="9" fill="#4a3a15"/></svg><div id="t23" style="left:110.56px;top:343.05px;font-family:'Liberation Sans', sans-serif;font-size:16px;line-height:20.8px;color:#000;white-space:pre;transform:scaleX(0.8881);transform-origin:0 0;">Views</div><svg style="left:73px;top:370px" width="11" height="11" viewBox="0 0 11 11"><rect x="0.5" y="0.5" width="10" height="10" rx="1" fill="url(#gexp)" stroke="#8e8f8f"/><rect x="2.5" y="5" width="6" height="1" fill="#2f4a8f"/><rect x="5" y="2.5" width="1" height="6" fill="#2f4a8f"/></svg><svg style="left:89px;top:368px" width="16" height="13" viewBox="0 0 16 13"><path d="M1.5 2.5 L1.5 1 L2 0.5 L6 0.5 L7 1.5 L7 2.5" fill="#f4e6a6" stroke="#a39472"/><rect x="0.5" y="2.5" width="13" height="9.5" fill="url(#gfold)" stroke="#a39472"/><rect x="1" y="12" width="14" height="1" fill="#2b210c"/><rect x="14" y="3" width="1" height="9" fill="#4a3a15"/></svg><div id="t24" style="left:109.68px;top:365.05px;font-family:'Liberation Sans', sans-serif;font-size:16px;line-height:20.8px;color:#000;white-space:pre;transform:scaleX(0.8851);transform-origin:0 0;">Synonyms</div><svg style="left:73px;top:392px" width="11" height="11" viewBox="0 0 11 11"><rect x="0.5" y="0.5" width="10" height="10" rx="1" fill="url(#gexp)" stroke="#8e8f8f"/><rect x="2.5" y="5" width="6" height="1" fill="#2f4a8f"/><rect x="5" y="2.5" width="1" height="6" fill="#2f4a8f"/></svg><svg style="left:89px;top:390px" width="16" height="13" viewBox="0 0 16 13"><path d="M1.5 2.5 L1.5 1 L2 0.5 L6 0.5 L7 1.5 L7 2.5" fill="#f4e6a6" stroke="#a39472"/><rect x="0.5" y="2.5" width="13" height="9.5" fill="url(#gfold)" stroke="#a39472"/><rect x="1" y="12" width="14" height="1" fill="#2b210c"/><rect x="14" y="3" width="1" height="9" fill="#4a3a15"/></svg><div id="t25" style="left:108.65px;top:387.05px;font-family:'Liberation Sans', sans-serif;font-size:16px;line-height:20.8px;color:#000;white-space:pre;transform:scaleX(0.9693);transform-origin:0 0;">Programmability</div><svg style="left:73px;top:414px" width="11" height="11" viewBox="0 0 11 11"><rect x="0.5" y="0.5" width="10" height="10" rx="1" fill="url(#gexp)" stroke="#8e8f8f"/><rect x="2.5" y="5" width="6" height="1" fill="#2f4a8f"/><rect x="5" y="2.5" width="1" height="6" fill="#2f4a8f"/></svg><svg style="left:89px;top:412px" width="16" height="13" viewBox="0 0 16 13"><path d="M1.5 2.5 L1.5 1 L2 0.5 L6 0.5 L7 1.5 L7 2.5" fill="#f4e6a6" stroke="#a39472"/><rect x="0.5" y="2.5" width="13" height="9.5" fill="url(#gfold)" stroke="#a39472"/><rect x="1" y="12" width="14" height="1" fill="#2b210c"/><rect x="14" y="3" width="1" height="9" fill="#4a3a15"/></svg><div id="t26" style="left:109.67px;top:409.05px;font-family:'Liberation Sans', sans-serif;font-size:16px;line-height:20.8px;color:#000;white-space:pre;transform:scaleX(0.8952);transform-origin:0 0;">Service Broker</div><svg style="left:73px;top:436px" width="11" height="11" viewBox="0 0 11 11"><rect x="0.5" y="0.5" width="10" height="10" rx="1" fill="url(#gexp)" stroke="#8e8f8f"/><rect x="2.5" y="5" width="6" height="1" fill="#2f4a8f"/><rect x="5" y="2.5" width="1" height="6" fill="#2f4a8f"/></svg><svg style="left:89px;top:434px" width="16" height="13" viewBox="0 0 16 13"><path d="M1.5 2.5 L1.5 1 L2 0.5 L6 0.5 L7 1.5 L7 2.5" fill="#f4e6a6" stroke="#a39472"/><rect x="0.5" y="2.5" width="13" height="9.5" fill="url(#gfold)" stroke="#a39472"/><rect x="1" y="12" width="14" height="1" fill="#2b210c"/><rect x="14" y="3" width="1" height="9" fill="#4a3a15"/></svg><div id="t27" style="left:109.64px;top:431.05px;font-family:'Liberation Sans', sans-serif;font-size:16px;line-height:20.8px;color:#000;white-space:pre;transform:scaleX(0.9345);transform-origin:0 0;">Storage</div><svg style="left:73px;top:458px" width="11" height="11" viewBox="0 0 11 11"><rect x="0.5" y="0.5" width="10" height="10" rx="1" fill="url(#gexp)" stroke="#8e8f8f"/><rect x="2.5" y="5" width="6" height="1" fill="#2f4a8f"/><rect x="5" y="2.5" width="1" height="6" fill="#2f4a8f"/></svg><svg style="left:89px;top:456px" width="16" height="13" viewBox="0 0 16 13"><path d="M1.5 2.5 L1.5 1 L2 0.5 L6 0.5 L7 1.5 L7 2.5" fill="#f4e6a6" stroke="#a39472"/><rect x="0.5" y="2.5" width="13" height="9.5" fill="url(#gfold)" stroke="#a39472"/><rect x="1" y="12" width="14" height="1" fill="#2b210c"/><rect x="14" y="3" width="1" height="9" fill="#4a3a15"/></svg><div id="t28" style="left:109.67px;top:453.05px;font-family:'Liberation Sans', sans-serif;font-size:16px;line-height:20.8px;color:#000;white-space:pre;transform:scaleX(0.9018);transform-origin:0 0;">Security</div><svg style="left:54px;top:480px" width="11" height="11" viewBox="0 0 11 11"><rect x="0.5" y="0.5" width="10" height="10" rx="1" fill="url(#gexp)" stroke="#8e8f8f"/><rect x="2.5" y="5" width="6" height="1" fill="#2f4a8f"/><rect x="5" y="2.5" width="1" height="6" fill="#2f4a8f"/></svg><svg style="left:72px;top:476px" width="15" height="18" viewBox="0 0 15 18"><path d="M0.5 3 L0.5 13 Q0.5 15.5 6 15.5 Q11.5 15.5 11.5 13 L11.5 3 Z" fill="url(#gcyl)" stroke="#b98b1c"/><ellipse cx="6" cy="3" rx="5.5" ry="2.5" fill="#fff4c0" stroke="#b98b1c"/></svg><div id="t29" style="left:91.04px;top:475.05px;font-family:'Liberation Sans', sans-serif;font-size:16px;line-height:20.8px;color:#000;white-space:pre;transform:scaleX(0.9150);transform-origin:0 0;">AdventureWorks2014</div><svg style="left:54px;top:502px" width="11" height="11" viewBox="0 0 11 11"><rect x="0.5" y="0.5" width="10" height="10" rx="1" fill="url(#gexp)" stroke="#8e8f8f"/><rect x="2.5" y="5" width="6" height="1" fill="#2f4a8f"/><rect x="5" y="2.5" width="1" height="6" fill="#2f4a8f"/></svg><svg style="left:72px;top:498px" width="15" height="18" viewBox="0 0 15 18"><path d="M0.5 3 L0.5 13 Q0.5 15.5 6 15.5 Q11.5 15.5 11.5 13 L11.5 3 Z" fill="url(#gcyl)" stroke="#b98b1c"/><ellipse cx="6" cy="3" rx="5.5" ry="2.5" fill="#fff4c0" stroke="#b98b1c"/></svg><div id="t30" style="left:91.04px;top:497.05px;font-family:'Liberation Sans', sans-serif;font-size:16px;line-height:20.8px;color:#000;white-space:pre;transform:scaleX(0.9235);transform-origin:0 0;">AdventureWorksDW2012</div><svg style="left:54px;top:524px" width="11" height="11" viewBox="0 0 11 11"><rect x="0.5" y="0.5" width="10" height="10" rx="1" fill="url(#gexp)" stroke="#8e8f8f"/><rect x="2.5" y="5" width="6" height="1" fill="#2f4a8f"/><rect x="5" y="2.5" width="1" height="6" fill="#2f4a8f"/></svg><svg style="left:72px;top:520px" width="15" height="18" viewBox="0 0 15 18"><path d="M0.5 3 L0.5 13 Q0.5 15.5 6 15.5 Q11.5 15.5 11.5 13 L11.5 3 Z" fill="url(#gcyl)" stroke="#b98b1c"/><ellipse cx="6" cy="3" rx="5.5" ry="2.5" fill="#fff4c0" stroke="#b98b1c"/></svg><div id="t31" style="left:91.04px;top:519.05px;font-family:'Liberation Sans', sans-serif;font-size:16px;line-height:20.8px;color:#000;white-space:pre;transform:scaleX(0.9235);transform-origin:0 0;">AdventureWorksDW2014</div><svg style="left:54px;top:546px" width="11" height="11" viewBox="0 0 11 11"><rect x="0.5" y="0.5" width="10" height="10" rx="1" fill="url(#gexp)" stroke="#8e8f8f"/><rect x="2.5" y="5" width="6" height="1" fill="#2f4a8f"/><rect x="5" y="2.5" width="1" height="6" fill="#2f4a8f"/></svg><svg style="left:72px;top:542px" width="15" height="18" viewBox="0 0 15 18"><path d="M0.5 3 L0.5 13 Q0.5 15.5 6 15.5 Q11.5 15.5 11.5 13 L11.5 3 Z" fill="url(#gcyl)" stroke="#b98b1c"/><ellipse cx="6" cy="3" rx="5.5" ry="2.5" fill="#fff4c0" stroke="#b98b1c"/></svg><div id="t32" style="left:91.04px;top:541.05px;font-family:'Liberation Sans', sans-serif;font-size:16px;line-height:20.8px;color:#000;white-space:pre;transform:scaleX(0.9118);transform-origin:0 0;">AdventureWorksLT2012</div><svg style="left:54px;top:568px" width="11" height="11" viewBox="0 0 11 11"><rect x="0.5" y="0.5" width="10" height="10" rx="1" fill="url(#gexp)" stroke="#8e8f8f"/><rect x="2.5" y="5" width="6" height="1" fill="#2f4a8f"/><rect x="5" y="2.5" width="1" height="6" fill="#2f4a8f"/></svg><svg style="left:72px;top:564px" width="15" height="18" viewBox="0 0 15 18"><path d="M0.5 3 L0.5 13 Q0.5 15.5 6 15.5 Q11.5 15.5 11.5 13 L11.5 3 Z" fill="url(#gcyl)" stroke="#b98b1c"/><ellipse cx="6" cy="3" rx="5.5" ry="2.5" fill="#fff4c0" stroke="#b98b1c"/></svg><div id="t33" style="left:91.03px;top:563.05px;font-family:'Liberation Sans', sans-serif;font-size:16px;line-height:20.8px;color:#000;white-space:pre;transform:scaleX(0.9500);transform-origin:0 0;">datatest</div><svg style="left:54px;top:590px" width="11" height="11" viewBox="0 0 11 11"><rect x="0.5" y="0.5" width="10" height="10" rx="1" fill="url(#gexp)" stroke="#8e8f8f"/><rect x="2.5" y="5" width="6" height="1" fill="#2f4a8f"/></svg><svg style="left:72px;top:586px" width="15" height="18" viewBox="0 0 15 18"><path d="M0.5 3 L0.5 13 Q0.5 15.5 6 15.5 Q11.5 15.5 11.5 13 L11.5 3 Z" fill="url(#gcyl)" stroke="#b98b1c"/><ellipse cx="6" cy="3" rx="5.5" ry="2.5" fill="#fff4c0" stroke="#b98b1c"/></svg><div id="t34" style="left:89.99px;top:585.05px;font-family:'Liberation Sans', sans-serif;font-size:16px;line-height:20.8px;color:#000;white-space:pre;transform:scaleX(1.0067);transform-origin:0 0;">hrmt</div><svg style="left:73px;top:612px" width="11" height="11" viewBox="0 0 11 11"><rect x="0.5" y="0.5" width="10" height="10" rx="1" fill="url(#gexp)" stroke="#8e8f8f"/><rect x="2.5" y="5" width="6" height="1" fill="#2f4a8f"/><rect x="5" y="2.5" width="1" height="6" fill="#2f4a8f"/></svg><svg style="left:89px;top:610px" width="16" height="13" viewBox="0 0 16 13"><path d="M1.5 2.5 L1.5 1 L2 0.5 L6 0.5 L7 1.5 L7 2.5" fill="#f4e6a6" stroke="#a39472"/><rect x="0.5" y="2.5" width="13" height="9.5" fill="url(#gfold)" stroke="#a39472"/><rect x="1" y="12" width="14" height="1" fill="#2b210c"/><rect x="14" y="3" width="1" height="9" fill="#4a3a15"/></svg><div id="t35" style="left:108.70px;top:607.05px;font-family:'Liberation Sans', sans-serif;font-size:16px;line-height:20.8px;color:#000;white-space:pre;transform:scaleX(0.9374);transform-origin:0 0;">Database Diagrams</div><svg style="left:73px;top:634px" width="11" height="11" viewBox="0 0 11 11"><rect x="0.5" y="0.5" width="10" height="10" rx="1" fill="url(#gexp)" stroke="#8e8f8f"/><rect x="2.5" y="5" width="6" height="1" fill="#2f4a8f"/></svg><svg style="left:89px;top:632px" width="16" height="13" viewBox="0 0 16 13"><path d="M1.5 2.5 L1.5 1 L2 0.5 L6 0.5 L7 1.5 L7 2.5" fill="#f4e6a6" stroke="#a39472"/><rect x="0.5" y="2.5" width="13" height="9.5" fill="url(#gfold)" stroke="#a39472"/><rect x="1" y="12" width="14" height="1" fill="#2b210c"/><rect x="14" y="3" width="1" height="9" fill="#4a3a15"/></svg><div id="t36" style="left:109.64px;top:629.05px;font-family:'Liberation Sans', sans-serif;font-size:16px;line-height:20.8px;color:#000;white-space:pre;transform:scaleX(0.9422);transform-origin:0 0;">Tables</div><svg style="left:92px;top:656px" width="11" height="11" viewBox="0 0 11 11"><rect x="0.5" y="0.5" width="10" height="10" rx="1" fill="url(#gexp)" stroke="#8e8f8f"/><rect x="2.5" y="5" width="6" height="1" fill="#2f4a8f"/><rect x="5" y="2.5" width="1" height="6" fill="#2f4a8f"/></svg><svg style="left:108px;top:654px" width="16" height="13" viewBox="0 0 16 13"><path d="M1.5 2.5 L1.5 1 L2 0.5 L6 0.5 L7 1.5 L7 2.5" fill="#f4e6a6" stroke="#a39472"/><rect x="0.5" y="2.5" width="13" height="9.5" fill="url(#gfold)" stroke="#a39472"/><rect x="1" y="12" width="14" height="1" fill="#2b210c"/><rect x="14" y="3" width="1" height="9" fill="#4a3a15"/></svg><div id="t37" style="left:129.05px;top:651.05px;font-family:'Liberation Sans', sans-serif;font-size:16px;line-height:20.8px;color:#000;white-space:pre;transform:scaleX(0.9029);transform-origin:0 0;">System Tables</div><svg style="left:92px;top:678px" width="11" height="11" viewBox="0 0 11 11"><rect x="0.5" y="0.5" width="10" height="10" rx="1" fill="url(#gexp)" stroke="#8e8f8f"/><rect x="2.5" y="5" width="6" height="1" fill="#2f4a8f"/><rect x="5" y="2.5" width="1" height="6" fill="#2f4a8f"/></svg><svg style="left:108px;top:676px" width="16" height="13" viewBox="0 0 16 13"><path d="M1.5 2.5 L1.5 1 L2 0.5 L6 0.5 L7 1.5 L7 2.5" fill="#f4e6a6" stroke="#a39472"/><rect x="0.5" y="2.5" width="13" height="9.5" fill="url(#gfold)" stroke="#a39472"/><rect x="1" y="12" width="14" height="1" fill="#2b210c"/><rect x="14" y="3" width="1" height="9" fill="#4a3a15"/></svg><div id="t38" style="left:128.10px;top:673.05px;font-family:'Liberation Sans', sans-serif;font-size:16px;line-height:20.8px;color:#000;white-space:pre;transform:scaleX(0.9314);transform-origin:0 0;">FileTables</div><svg style="left:92px;top:700px" width="11" height="11" viewBox="0 0 11 11"><rect x="0.5" y="0.5" width="10" height="10" rx="1" fill="url(#gexp)" stroke="#8e8f8f"/><rect x="2.5" y="5" width="6" height="1" fill="#2f4a8f"/><rect x="5" y="2.5" width="1" height="6" fill="#2f4a8f"/></svg><svg style="left:110px;top:698px" width="12" height="11" viewBox="0 0 12 11"><rect x="0.5" y="0.5" width="11" height="10" fill="#e8eefb" stroke="#4a5f88"/><rect x="0" y="0" width="12" height="2" fill="#4f86e8"/><g fill="#a7b6d3"><rect x="2" y="4" width="3" height="1"/><rect x="6" y="4" width="3" height="1"/><rect x="2" y="6" width="3" height="1"/><rect x="6" y="6" width="3" height="1"/><rect x="2" y="8" width="3" height="1"/><rect x="6" y="8" width="3" height="1"/></g></svg><div id="t39" style="left:129.02px;top:695.05px;font-family:'Liberation Sans', sans-serif;font-size:16px;line-height:20.8px;color:#000;white-space:pre;transform:scaleX(0.9598);transform-origin:0 0;">dbo.department</div><svg style="left:92px;top:722px" width="11" height="11" viewBox="0 0 11 11"><rect x="0.5" y="0.5" width="10" height="10" rx="1" fill="url(#gexp)" stroke="#8e8f8f"/><rect x="2.5" y="5" width="6" height="1" fill="#2f4a8f"/><rect x="5" y="2.5" width="1" height="6" fill="#2f4a8f"/></svg><svg style="left:110px;top:720px" width="12" height="11" viewBox="0 0 12 11"><rect x="0.5" y="0.5" width="11" height="10" fill="#e8eefb" stroke="#4a5f88"/><rect x="0" y="0" width="12" height="2" fill="#4f86e8"/><g fill="#a7b6d3"><rect x="2" y="4" width="3" height="1"/><rect x="6" y="4" width="3" height="1"/><rect x="2" y="6" width="3" height="1"/><rect x="6" y="6" width="3" height="1"/><rect x="2" y="8" width="3" height="1"/><rect x="6" y="8" width="3" height="1"/></g></svg><div id="t40" style="left:129.02px;top:717.05px;font-family:'Liberation Sans', sans-serif;font-size:16px;line-height:20.8px;color:#000;white-space:pre;transform:scaleX(0.9626);transform-origin:0 0;">dbo.employee</div><svg style="left:92px;top:744px" width="11" height="11" viewBox="0 0 11 11"><rect x="0.5" y="0.5" width="10" height="10" rx="1" fill="url(#gexp)" stroke="#8e8f8f"/><rect x="2.5" y="5" width="6" height="1" fill="#2f4a8f"/><rect x="5" y="2.5" width="1" height="6" fill="#2f4a8f"/></svg><svg style="left:110px;top:742px" width="12" height="11" viewBox="0 0 12 11"><rect x="0.5" y="0.5" width="11" height="10" fill="#e8eefb" stroke="#4a5f88"/><rect x="0" y="0" width="12" height="2" fill="#4f86e8"/><g fill="#a7b6d3"><rect x="2" y="4" width="3" height="1"/><rect x="6" y="4" width="3" height="1"/><rect x="2" y="6" width="3" height="1"/><rect x="6" y="6" width="3" height="1"/><rect x="2" y="8" width="3" height="1"/><rect x="6" y="8" width="3" height="1"/></g></svg><div id="t41" style="left:129.02px;top:739.05px;font-family:'Liberation Sans', sans-serif;font-size:16px;line-height:20.8px;color:#000;white-space:pre;transform:scaleX(0.9667);transform-origin:0 0;">dbo.product</div><svg style="left:92px;top:766px" width="11" height="11" viewBox="0 0 11 11"><rect x="0.5" y="0.5" width="10" height="10" rx="1" fill="url(#gexp)" stroke="#8e8f8f"/><rect x="2.5" y="5" width="6" height="1" fill="#2f4a8f"/><rect x="5" y="2.5" width="1" height="6" fill="#2f4a8f"/></svg><svg style="left:110px;top:764px" width="12" height="11" viewBox="0 0 12 11"><rect x="0.5" y="0.5" width="11" height="10" fill="#e8eefb" stroke="#4a5f88"/><rect x="0" y="0" width="12" height="2" fill="#4f86e8"/><g fill="#a7b6d3"><rect x="2" y="4" width="3" height="1"/><rect x="6" y="4" width="3" height="1"/><rect x="2" y="6" width="3" height="1"/><rect x="6" y="6" width="3" height="1"/><rect x="2" y="8" width="3" height="1"/><rect x="6" y="8" width="3" height="1"/></g></svg><div id="t42" style="left:129.02px;top:761.05px;font-family:'Liberation Sans', sans-serif;font-size:16px;line-height:20.8px;color:#000;white-space:pre;transform:scaleX(0.9671);transform-origin:0 0;">dbo.project</div><svg style="left:92px;top:788px" width="11" height="11" viewBox="0 0 11 11"><rect x="0.5" y="0.5" width="10" height="10" rx="1" fill="url(#gexp)" stroke="#8e8f8f"/><rect x="2.5" y="5" width="6" height="1" fill="#2f4a8f"/><rect x="5" y="2.5" width="1" height="6" fill="#2f4a8f"/></svg><svg style="left:110px;top:786px" width="12" height="11" viewBox="0 0 12 11"><rect x="0.5" y="0.5" width="11" height="10" fill="#e8eefb" stroke="#4a5f88"/><rect x="0" y="0" width="12" height="2" fill="#4f86e8"/><g fill="#a7b6d3"><rect x="2" y="4" width="3" height="1"/><rect x="6" y="4" width="3" height="1"/><rect x="2" y="6" width="3" height="1"/><rect x="6" y="6" width="3" height="1"/><rect x="2" y="8" width="3" height="1"/><rect x="6" y="8" width="3" height="1"/></g></svg><div id="t43" style="left:129.04px;top:783.05px;font-family:'Liberation Sans', sans-serif;font-size:16px;line-height:20.8px;color:#000;white-space:pre;transform:scaleX(0.9235);transform-origin:0 0;">dbo.works_on</div><svg style="left:73px;top:810px" width="11" height="11" viewBox="0 0 11 11"><rect x="0.5" y="0.5" width="10" height="10" rx="1" fill="url(#gexp)" stroke="#8e8f8f"/><rect x="2.5" y="5" width="6" height="1" fill="#2f4a8f"/><rect x="5" y="2.5" width="1" height="6" fill="#2f4a8f"/></svg><svg style="left:89px;top:808px" width="16" height="13" viewBox="0 0 16 13"><path d="M1.5 2.5 L1.5 1 L2 0.5 L6 0.5 L7 1.5 L7 2.5" fill="#f4e6a6" stroke="#a39472"/><rect x="0.5" y="2.5" width="13" height="9.5" fill="url(#gfold)" stroke="#a39472"/><rect x="1" y="12" width="14" height="1" fill="#2b210c"/><rect x="14" y="3" width="1" height="9" fill="#4a3a15"/></svg><div id="t44" style="left:110.56px;top:805.05px;font-family:'Liberation Sans', sans-serif;font-size:16px;line-height:20.8px;color:#000;white-space:pre;transform:scaleX(0.8881);transform-origin:0 0;">Views</div><svg style="left:73px;top:832px" width="11" height="11" viewBox="0 0 11 11"><rect x="0.5" y="0.5" width="10" height="10" rx="1" fill="url(#gexp)" stroke="#8e8f8f"/><rect x="2.5" y="5" width="6" height="1" fill="#2f4a8f"/><rect x="5" y="2.5" width="1" height="6" fill="#2f4a8f"/></svg><svg style="left:89px;top:830px" width="16" height="13" viewBox="0 0 16 13"><path d="M1.5 2.5 L1.5 1 L2 0.5 L6 0.5 L7 1.5 L7 2.5" fill="#f4e6a6" stroke="#a39472"/><rect x="0.5" y="2.5" width="13" height="9.5" fill="url(#gfold)" stroke="#a39472"/><rect x="1" y="12" width="14" height="1" fill="#2b210c"/><rect x="14" y="3" width="1" height="9" fill="#4a3a15"/></svg><div id="t45" style="left:109.68px;top:827.05px;font-family:'Liberation Sans', sans-serif;font-size:16px;line-height:20.8px;color:#000;white-space:pre;transform:scaleX(0.8851);transform-origin:0 0;">Synonyms</div><svg style="left:73px;top:854px" width="11" height="11" viewBox="0 0 11 11"><rect x="0.5" y="0.5" width="10" height="10" rx="1" fill="url(#gexp)" stroke="#8e8f8f"/><rect x="2.5" y="5" width="6" height="1" fill="#2f4a8f"/><rect x="5" y="2.5" width="1" height="6" fill="#2f4a8f"/></svg><svg style="left:89px;top:852px" width="16" height="13" viewBox="0 0 16 13"><path d="M1.5 2.5 L1.5 1 L2 0.5 L6 0.5 L7 1.5 L7 2.5" fill="#f4e6a6" stroke="#a39472"/><rect x="0.5" y="2.5" width="13" height="9.5" fill="url(#gfold)" stroke="#a39472"/><rect x="1" y="12" width="14" height="1" fill="#2b210c"/><rect x="14" y="3" width="1" height="9" fill="#4a3a15"/></svg><div id="t46" style="left:108.65px;top:849.05px;font-family:'Liberation Sans', sans-serif;font-size:16px;line-height:20.8px;color:#000;white-space:pre;transform:scaleX(0.9693);transform-origin:0 0;">Programmability</div><svg style="left:73px;top:876px" width="11" height="11" viewBox="0 0 11 11"><rect x="0.5" y="0.5" width="10" height="10" rx="1" fill="url(#gexp)" stroke="#8e8f8f"/><rect x="2.5" y="5" width="6" height="1" fill="#2f4a8f"/><rect x="5" y="2.5" width="1" height="6" fill="#2f4a8f"/></svg><svg style="left:89px;top:874px" width="16" height="13" viewBox="0 0 16 13"><path d="M1.5 2.5 L1.5 1 L2 0.5 L6 0.5 L7 1.5 L7 2.5" fill="#f4e6a6" stroke="#a39472"/><rect x="0.5" y="2.5" width="13" height="9.5" fill="url(#gfold)" stroke="#a39472"/><rect x="1" y="12" width="14" height="1" fill="#2b210c"/><rect x="14" y="3" width="1" height="9" fill="#4a3a15"/></svg><div id="t47" style="left:109.67px;top:871.05px;font-family:'Liberation Sans', sans-serif;font-size:16px;line-height:20.8px;color:#000;white-space:pre;transform:scaleX(0.8952);transform-origin:0 0;">Service Broker</div><svg style="left:73px;top:898px" width="11" height="11" viewBox="0 0 11 11"><rect x="0.5" y="0.5" width="10" height="10" rx="1" fill="url(#gexp)" stroke="#8e8f8f"/><rect x="2.5" y="5" width="6" height="1" fill="#2f4a8f"/><rect x="5" y="2.5" width="1" height="6" fill="#2f4a8f"/></svg><svg style="left:89px;top:896px" width="16" height="13" viewBox="0 0 16 13"><path d="M1.5 2.5 L1.5 1 L2 0.5 L6 0.5 L7 1.5 L7 2.5" fill="#f4e6a6" stroke="#a39472"/><rect x="0.5" y="2.5" width="13" height="9.5" fill="url(#gfold)" stroke="#a39472"/><rect x="1" y="12" width="14" height="1" fill="#2b210c"/><rect x="14" y="3" width="1" height="9" fill="#4a3a15"/></svg><div id="t48" style="left:109.64px;top:893.05px;font-family:'Liberation Sans', sans-serif;font-size:16px;line-height:20.8px;color:#000;white-space:pre;transform:scaleX(0.9345);transform-origin:0 0;">Storage</div><svg style="left:73px;top:920px" width="11" height="11" viewBox="0 0 11 11"><rect x="0.5" y="0.5" width="10" height="10" rx="1" fill="url(#gexp)" stroke="#8e8f8f"/><rect x="2.5" y="5" width="6" height="1" fill="#2f4a8f"/><rect x="5" y="2.5" width="1" height="6" fill="#2f4a8f"/></svg><svg style="left:89px;top:918px" width="16" height="13" viewBox="0 0 16 13"><path d="M1.5 2.5 L1.5 1 L2 0.5 L6 0.5 L7 1.5 L7 2.5" fill="#f4e6a6" stroke="#a39472"/><rect x="0.5" y="2.5" width="13" height="9.5" fill="url(#gfold)" stroke="#a39472"/><rect x="1" y="12" width="14" height="1" fill="#2b210c"/><rect x="14" y="3" width="1" height="9" fill="#4a3a15"/></svg><div id="t49" style="left:109.67px;top:915.05px;font-family:'Liberation Sans', sans-serif;font-size:16px;line-height:20.8px;color:#000;white-space:pre;transform:scaleX(0.9018);transform-origin:0 0;">Security</div><svg style="left:54px;top:942px" width="11" height="11" viewBox="0 0 11 11"><rect x="0.5" y="0.5" width="10" height="10" rx="1" fill="url(#gexp)" stroke="#8e8f8f"/><rect x="2.5" y="5" width="6" height="1" fill="#2f4a8f"/><rect x="5" y="2.5" width="1" height="6" fill="#2f4a8f"/></svg><svg style="left:72px;top:938px" width="15" height="18" viewBox="0 0 15 18"><path d="M0.5 3 L0.5 13 Q0.5 15.5 6 15.5 Q11.5 15.5 11.5 13 L11.5 3 Z" fill="url(#gcyl)" stroke="#b98b1c"/><ellipse cx="6" cy="3" rx="5.5" ry="2.5" fill="#fff4c0" stroke="#b98b1c"/></svg><div id="t50" style="left:90.04px;top:937.05px;font-family:'Liberation Sans', sans-serif;font-size:16px;line-height:20.8px;color:#000;white-space:pre;transform:scaleX(0.9704);transform-origin:0 0;">projects</div><svg style="left:54px;top:964px" width="11" height="11" viewBox="0 0 11 11"><rect x="0.5" y="0.5" width="10" height="10" rx="1" fill="url(#gexp)" stroke="#8e8f8f"/><rect x="2.5" y="5" width="6" height="1" fill="#2f4a8f"/><rect x="5" y="2.5" width="1" height="6" fill="#2f4a8f"/></svg><svg style="left:72px;top:960px" width="15" height="18" viewBox="0 0 15 18"><path d="M0.5 3 L0.5 13 Q0.5 15.5 6 15.5 Q11.5 15.5 11.5 13 L11.5 3 Z" fill="url(#gcyl)" stroke="#b98b1c"/><ellipse cx="6" cy="3" rx="5.5" ry="2.5" fill="#fff4c0" stroke="#b98b1c"/></svg><div id="t51" style="left:91.04px;top:959.05px;font-family:'Liberation Sans', sans-serif;font-size:16px;line-height:20.8px;color:#000;white-space:pre;transform:scaleX(0.9235);transform-origin:0 0;">sample</div><div style="left:301px;top:186px;width:20px;height:784px;background:#f0f0f0"></div><svg style="left:304px;top:192px" width="14" height="10" viewBox="0 0 14 10"><path d="M2 8 L7 3 L12 8" fill="none" stroke="#606060" stroke-width="2"/></svg><div style="left:302px;top:208px;width:18px;height:603px;background:#cdcdcd"></div><svg style="left:304px;top:954px" width="14" height="10" viewBox="0 0 14 10"><path d="M2 2 L7 7 L12 2" fill="none" stroke="#606060" stroke-width="2"/></svg><div style="left:9px;top:970px;width:292px;height:20px;background:#f0f0f0"></div><svg style="left:14px;top:973px" width="10" height="14" viewBox="0 0 10 14"><path d="M8 2 L3 7 L8 12" fill="none" stroke="#606060" stroke-width="2"/></svg><div style="left:31px;top:971px;width:137px;height:18px;background:#cdcdcd"></div><svg style="left:284px;top:973px" width="10" height="14" viewBox="0 0 10 14"><path d="M2 2 L7 7 L2 12" fill="none" stroke="#606060" stroke-width="2"/></svg><div style="left:301px;top:970px;width:20px;height:20px;background:#f0f0f0"></div><div style="left:331px;top:127px;width:312px;height:30px;background:linear-gradient(#fffcf4 0px,#fff3d0 14px,#ffe8a6 15px,#ffe8a6 100%);border-radius:3px 3px 0 0"></div><div id="t52" style="left:335.60px;top:131.05px;font-family:'Liberation Sans', sans-serif;font-size:16px;line-height:20.8px;color:#000;white-space:pre;transform:scaleX(0.9026);transform-origin:0 0;">SQLQuery10.sql - D...V7MR43\frank (57))*</div><svg style="left:623px;top:137px" width="13" height="11" viewBox="0 0 13 11"><path d="M1 0.5 L12 10.5 M12 0.5 L1 10.5" stroke="#6e6346" stroke-width="1.5"/></svg><div id="t53" style="left:648.71px;top:131.05px;font-family:'Liberation Sans', sans-serif;font-size:16px;line-height:20.8px;color:#fff;white-space:pre;transform:scaleX(0.8948);transform-origin:0 0;">SQLQuery9.sql - DE...V7MR43\frank (56))*</div><div id="t54" style="left:962.10px;top:131.05px;font-family:'Liberation Sans', sans-serif;font-size:16px;line-height:20.8px;color:#fff;white-space:pre;transform:scaleX(0.8984);transform-origin:0 0;">SQLQuery8.sql - DE...V7MR43\frank (55))*</div><svg style="left:1894px;top:138px" width="12" height="8" viewBox="0 0 12 8"><path d="M0 0 L11 0 L5.5 6 Z" fill="#ced6e4"/></svg><div style="left:331px;top:153px;width:1582px;height:5px;background:#ffe8a6;border-radius:0 3px 0 0"></div><div style="left:331px;top:158px;width:1582px;height:394px;background:#fff"></div><div style="left:331px;top:158px;width:21px;height:394px;background:#f0f0f0"></div><div style="left:355px;top:158px;width:6px;height:394px;background:transparent"></div><div style="left:355px;top:158px;width:7px;height:149px;background:#ffe95c"></div><svg style="left:365px;top:163px" width="11" height="11" viewBox="0 0 11 11"><rect x="0.5" y="0.5" width="10" height="10" fill="#fff" stroke="#a5a5a5"/><rect x="2.5" y="5" width="6" height="1" fill="#555"/></svg><svg style="left:365px;top:184px" width="11" height="11" viewBox="0 0 11 11"><rect x="0.5" y="0.5" width="10" height="10" fill="#fff" stroke="#a5a5a5"/><rect x="2.5" y="5" width="6" height="1" fill="#555"/></svg><div style="left:371px;top:176px;width:1px;height:6px;background:#a5a5a5"></div><div style="left:371px;top:196px;width:1px;height:110px;background:#a5a5a5"></div><div style="left:371px;top:305px;width:6px;height:1px;background:#a5a5a5"></div><div style="left:377.20px;top:160.09px;font-family:'Liberation Mono', monospace;font-size:16px;line-height:20.8px;color:#000;white-space:pre;letter-spacing:-0.6px;"><span style="color:#0000ff">USE</span> test_partitioned<span style="color:#808080">;</span></div><div style="left:377.20px;top:181.45px;font-family:'Liberation Mono', monospace;font-size:16px;line-height:20.8px;color:#000;white-space:pre;letter-spacing:-0.6px;"><span style="color:#0000ff">CREATE</span> <span style="color:#0000ff">TABLE</span> orders</div><div style="left:377.20px;top:202.81px;font-family:'Liberation Mono', monospace;font-size:16px;line-height:20.8px;color:#000;white-space:pre;letter-spacing:-0.6px;">   <span style="color:#808080">(</span>orderid <span style="color:#0000ff">INTEGER</span> <span style="color:#808080">NOT NULL</span><span style="color:#808080">,</span></div><div style="left:377.20px;top:224.17px;font-family:'Liberation Mono', monospace;font-size:16px;line-height:20.8px;color:#000;white-space:pre;letter-spacing:-0.6px;">    orderdate <span style="color:#0000ff">DATETIME</span><span style="color:#808080">,</span></div><div style="left:377.20px;top:245.53px;font-family:'Liberation Mono', monospace;font-size:16px;line-height:20.8px;color:#000;white-space:pre;letter-spacing:-0.6px;">    shippeddate <span style="color:#0000ff">DATETIME</span><span style="color:#808080">,</span></div><div style="left:377.20px;top:266.89px;font-family:'Liberation Mono', monospace;font-size:16px;line-height:20.8px;color:#000;white-space:pre;letter-spacing:-0.6px;">    freight <span style="color:#0000ff">money</span><span style="color:#808080">)</span></div><div style="left:377.20px;top:288.25px;font-family:'Liberation Mono', monospace;font-size:16px;line-height:20.8px;color:#000;white-space:pre;letter-spacing:-0.6px;"><span style="color:#0000ff">ON</span> myRangePS1 <span style="color:#808080">(</span>orderid<span style="color:#808080">)</span><span style="color:#808080">;</span></div><div style="left:441px;top:287px;width:1px;height:20px;background:#000"></div><div style="left:1892px;top:158px;width:20px;height:394px;background:#f0f0f0"></div><div style="left:1892px;top:158px;width:20px;height:20px;background:#d6dbe6;border:1px solid #8c99b3;box-sizing:border-box"></div><svg style="left:1895px;top:160px" width="14" height="16" viewBox="0 0 14 16"><rect x="1" y="7" width="12" height="1.5" fill="#000"/><path d="M7 0 L10 4 L4 4 Z M7 15 L10 11 L4 11 Z" fill="#000"/><rect x="6.3" y="3" width="1.4" height="3" fill="#000"/><rect x="6.3" y="9.5" width="1.4" height="3" fill="#000"/></svg><svg style="left:1895px;top:184px" width="14" height="10" viewBox="0 0 14 10"><path d="M2 8 L7 3 L12 8" fill="none" stroke="#a0a0a0" stroke-width="1.6"/></svg><div style="left:1893px;top:200px;width:18px;height:250px;background:#cdcdcd"></div><svg style="left:1895px;top:537px" width="14" height="10" viewBox="0 0 14 10"><path d="M2 2 L7 7 L12 2" fill="none" stroke="#a0a0a0" stroke-width="1.6"/></svg><div style="left:331px;top:552px;width:1561px;height:21px;background:#f0f0f0"></div><div style="left:331px;top:553px;width:74px;height:18px;background:#fff;border-right:1px solid #dcdcdc;border-bottom:1px solid #dcdcdc;box-sizing:border-box"></div><div id="t55" style="left:334.78px;top:552.05px;font-family:'Liberation Sans', sans-serif;font-size:16px;line-height:20.8px;color:#000;white-space:pre;transform:scaleX(0.9159);transform-origin:0 0;">100 %</div><svg style="left:392px;top:561px" width="8" height="4" viewBox="0 0 8 4"><path d="M0 0 L7 0 L3.5 4 Z" fill="#1e2533"/></svg><svg style="left:413px;top:556px" width="10" height="14" viewBox="0 0 10 14"><path d="M8 2 L3 7 L8 12" fill="none" stroke="#c8c8c8" stroke-width="1.6"/></svg><svg style="left:1876px;top:556px" width="10" height="14" viewBox="0 0 10 14"><path d="M2 2 L7 7 L2 12" fill="none" stroke="#c8c8c8" stroke-width="1.6"/></svg><div style="left:1892px;top:552px;width:20px;height:21px;background:#fff"></div><div style="left:331px;top:573px;width:1582px;height:391px;background:#f0f0f0"></div><div style="left:331px;top:959px;width:1582px;height:5px;background:#fff"></div><div style="left:331px;top:600px;width:1580px;height:362px;background:#fff;border:1px solid #d4d4d4;border-left:none;box-sizing:border-box"></div><div style="left:331px;top:577px;width:102px;height:24px;background:#fff;border:1px solid #dadada;border-left:none;border-bottom:none;box-sizing:border-box"></div><svg style="left:339px;top:580px" width="16" height="17" viewBox="0 0 16 17"><rect x="0.5" y="0.5" width="8" height="15" fill="#e9edf3" stroke="#7d879a"/><rect x="1" y="3" width="7" height="1" fill="#9aa4b6"/><rect x="1" y="8" width="7" height="1" fill="#9aa4b6"/><path d="M7.5 6.5 L12 6.5 L15.5 10 L15.5 16.5 L7.5 16.5 Z" fill="#fafbfd" stroke="#3c4e7a"/><g fill="#e8452a"><rect x="9" y="9" width="3" height="1"/><rect x="9" y="11.5" width="3" height="1"/><rect x="9" y="14" width="3" height="1"/></g><g fill="#3aa04a"><rect x="13" y="9" width="1" height="1"/><rect x="13" y="11.5" width="1" height="1"/></g></svg><div id="t56" style="left:360.17px;top:578.05px;font-family:'Liberation Sans', sans-serif;font-size:16px;line-height:20.8px;color:#000;white-space:pre;transform:scaleX(0.8887);transform-origin:0 0;">Messages</div><div style="left:361.00px;top:602.87px;font-family:'Liberation Mono', monospace;font-size:14px;line-height:18.2px;color:#000;white-space:pre;letter-spacing:-0.4px;">Command(s) completed successfully.</div><div style="left:1888px;top:602px;width:21px;height:336px;background:#f0f0f0"></div><svg style="left:1891px;top:607px" width="14" height="10" viewBox="0 0 14 10"><path d="M2 8 L7 3 L12 8" fill="none" stroke="#a0a0a0" stroke-width="1.6"/></svg><div style="left:1888px;top:623px;width:21px;height:277px;background:#cdcdcd"></div><svg style="left:1891px;top:923px" width="14" height="10" viewBox="0 0 14 10"><path d="M2 2 L7 7 L12 2" fill="none" stroke="#a0a0a0" stroke-width="1.6"/></svg><div style="left:332px;top:938px;width:1556px;height:21px;background:#f0f0f0"></div><div style="left:335px;top:938px;width:75px;height:20px;background:#fff;border:1px solid #dcdcdc;box-sizing:border-box"></div><div id="t57" style="left:338.58px;top:938.05px;font-family:'Liberation Sans', sans-serif;font-size:16px;line-height:20.8px;color:#000;white-space:pre;transform:scaleX(0.9205);transform-origin:0 0;">100 %</div><svg style="left:398px;top:947px" width="8" height="4" viewBox="0 0 8 4"><path d="M0 0 L7 0 L3.5 4 Z" fill="#1e2533"/></svg><svg style="left:420px;top:941px" width="10" height="14" viewBox="0 0 10 14"><path d="M8 2 L3 7 L8 12" fill="none" stroke="#c8c8c8" stroke-width="1.6"/></svg><svg style="left:1872px;top:941px" width="10" height="14" viewBox="0 0 10 14"><path d="M2 2 L7 7 L2 12" fill="none" stroke="#c8c8c8" stroke-width="1.6"/></svg><div style="left:331px;top:964px;width:1582px;height:24px;background:#f0e68c"></div><div style="left:331px;top:988px;width:1582px;height:5px;background:#ffe8a6;border-radius:0 0 3px 3px"></div><svg style="left:334px;top:968px" width="17" height="17" viewBox="0 0 17 17"><circle cx="8.5" cy="8.5" r="8" fill="#3d9a3d" stroke="#2a6a2a"/><circle cx="8.5" cy="6" r="6" fill="#6cc26c" opacity="0.5"/><path d="M4 9 L7.5 12.5 L13.5 5.5" fill="none" stroke="#fff" stroke-width="2.2"/></svg><div id="t58" style="left:353.08px;top:967.05px;font-family:'Liberation Sans', sans-serif;font-size:16px;line-height:20.8px;color:#000;white-space:pre;transform:scaleX(0.9249);transform-origin:0 0;">Query executed successfully.</div><div style="left:1239px;top:967px;width:1px;height:18px;background:#a59d5a;box-shadow:1px 0 0 #fffbd8"></div><div style="left:1459px;top:967px;width:1px;height:18px;background:#a59d5a;box-shadow:1px 0 0 #fffbd8"></div><div style="left:1657px;top:967px;width:1px;height:18px;background:#a59d5a;box-shadow:1px 0 0 #fffbd8"></div><div style="left:1775px;top:967px;width:1px;height:18px;background:#a59d5a;box-shadow:1px 0 0 #fffbd8"></div><div style="left:1845px;top:967px;width:1px;height:18px;background:#a59d5a;box-shadow:1px 0 0 #fffbd8"></div><div id="t59" style="left:1244.14px;top:967.05px;font-family:'Liberation Sans', sans-serif;font-size:16px;line-height:20.8px;color:#000;white-space:pre;transform:scaleX(0.8577);transform-origin:0 0;">DESKTOP-4V7MR43 (12.0 RTM)</div><div id="t60" style="left:1465.00px;top:967.05px;font-family:'Liberation Sans', sans-serif;font-size:16px;line-height:20.8px;color:#000;white-space:pre;transform:scaleX(0.8592);transform-origin:0 0;">DESKTOP-4V7MR43\frank ...</div><div id="t61" style="left:1663.00px;top:967.05px;font-family:'Liberation Sans', sans-serif;font-size:16px;line-height:20.8px;color:#000;white-space:pre;transform:scaleX(0.9450);transform-origin:0 0;">test_partitioned</div><div id="t62" style="left:1781.11px;top:967.05px;font-family:'Liberation Sans', sans-serif;font-size:16px;line-height:20.8px;color:#000;white-space:pre;transform:scaleX(0.8852);transform-origin:0 0;">00:00:00</div><div id="t63" style="left:1850.07px;top:967.05px;font-family:'Liberation Sans', sans-serif;font-size:16px;line-height:20.8px;color:#000;white-space:pre;transform:scaleX(0.9348);transform-origin:0 0;">0 rows</div><div id="t64" style="left:5.10px;top:1006.05px;font-family:'Liberation Sans', sans-serif;font-size:16px;line-height:20.8px;color:#fff;white-space:pre;transform:scaleX(0.9041);transform-origin:0 0;">Matches: (</div><div id="t65" style="left:1476.07px;top:1006.05px;font-family:'Liberation Sans', sans-serif;font-size:16px;line-height:20.8px;color:#fff;white-space:pre;transform:scaleX(0.9310);transform-origin:0 0;">Ln 7</div><div id="t66" style="left:1591.06px;top:1006.05px;font-family:'Liberation Sans', sans-serif;font-size:16px;line-height:20.8px;color:#fff;white-space:pre;transform:scaleX(0.9444);transform-origin:0 0;">Col 8</div><div id="t67" style="left:1706.09px;top:1006.05px;font-family:'Liberation Sans', sans-serif;font-size:16px;line-height:20.8px;color:#fff;white-space:pre;transform:scaleX(0.9062);transform-origin:0 0;">Ch 8</div><div id="t68" style="left:1875.08px;top:1006.05px;font-family:'Liberation Sans', sans-serif;font-size:16px;line-height:20.8px;color:#fff;white-space:pre;transform:scaleX(0.9583);transform-origin:0 0;">INS</div></body></html>
